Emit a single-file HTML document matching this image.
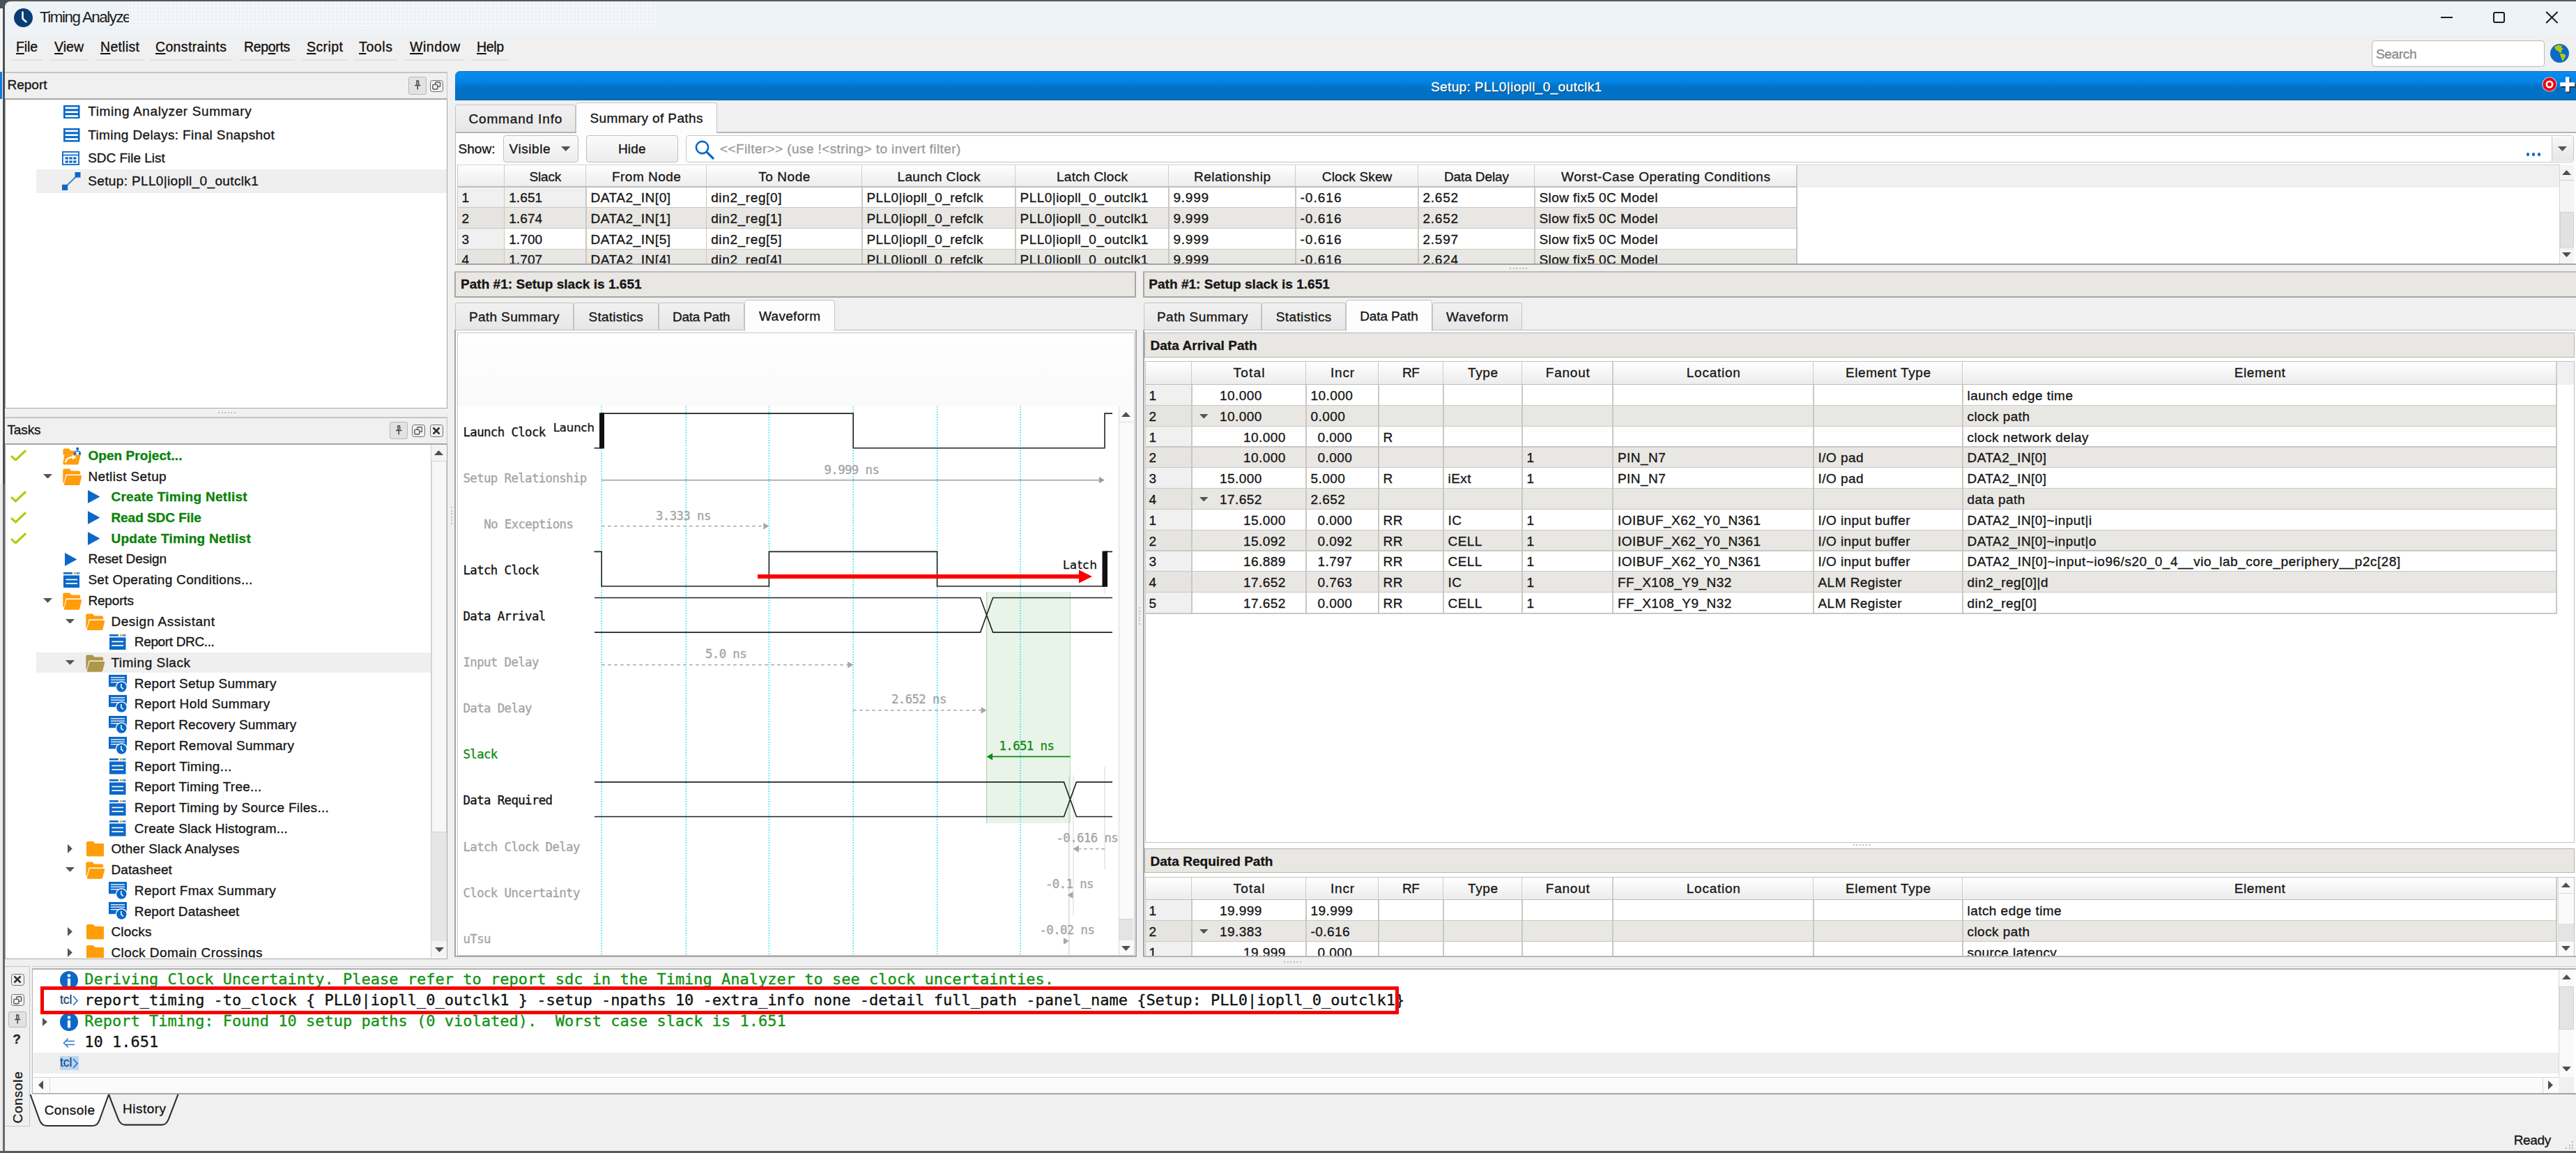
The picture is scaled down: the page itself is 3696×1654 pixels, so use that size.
<!DOCTYPE html>
<html lang="en"><head><meta charset="utf-8"><title>Timing Analyzer</title><style>
html,body{margin:0;padding:0;}
body{width:3696px;height:1654px;overflow:hidden;background:#f0f0f0;position:relative;
font-family:"Liberation Sans",sans-serif;color:#111;}
div,span,svg{position:absolute;box-sizing:border-box;}
.t{white-space:pre;line-height:1;color:#151515;-webkit-text-stroke:0.32px currentColor;}
.m{font-family:"Liberation Mono",monospace;}
.dm{font-family:"DejaVu Sans Mono","Liberation Mono",monospace;}
.ds{font-family:"DejaVu Sans","Liberation Sans",sans-serif;}
u{text-decoration:underline;text-underline-offset:2px;text-decoration-thickness:1.5px;}
.clip{overflow:hidden;}
</style></head>
<body>
<div style="left:0.0px;top:0.0px;width:3696.0px;height:51.0px;background:#eef3f8;"></div>
<div style="left:0.0px;top:51.0px;width:3696.0px;height:52.0px;background:#f0f0f0;"></div>
<div style="left:0.0px;top:0.0px;width:3696.0px;height:2.0px;background:#5a5a5a;"></div>
<div style="left:0.0px;top:0.0px;width:3.9px;height:1654.0px;background:#f5f5f5;"></div>
<div style="left:0.0px;top:103.0px;width:3.3px;height:38.5px;background:#0a7ae0;"></div>
<div style="left:3.8px;top:0.0px;width:2.9px;height:694.0px;background:#4a5157;"></div>
<div style="left:0.0px;top:694.0px;width:4.5px;height:960.0px;background:#ececec;"></div>
<div style="left:4.3px;top:694.0px;width:2.3px;height:960.0px;background:#686868;"></div>
<div style="left:0.0px;top:1651.0px;width:3696.0px;height:3.0px;background:#5a5a5a;"></div>
<div style="left:0.0px;top:0.0px;width:16.0px;height:12.0px;background:#4a5157;"></div>
<div style="left:6.7px;top:2.0px;width:14.0px;height:14.0px;background:#eef3f8;border-top-left-radius:8px;"></div>
<div style="left:184.0px;top:3.0px;width:758.0px;height:39.0px;background:#f3f6fa;background-image:radial-gradient(#e3e8ee 0.9px,transparent 1.1px);background-size:5.6px 5.6px;"></div>
<svg style="left:18.5px;top:10.5px;" width="29" height="29" viewBox="0 0 29 29"><circle cx="14.5" cy="14.5" r="13.5" fill="#0a3d73"/><path d="M13.5 6.4 V15.8 L18.4 20.2" stroke="#fff" stroke-width="2.5" fill="none" stroke-linecap="round" stroke-linejoin="round"/></svg>
<div class="clip" style="left:50.0px;top:4.0px;width:134.5px;height:44.0px;"><div style="left:-50.0px;top:-4.0px;width:3696px;height:1654px;">
<span class="t" style="left:57.0px;top:14.2px;font-size:22.3px;letter-spacing:-1.45px;color:#1c1c1c;-webkit-text-stroke:0;">Timing Analyzer</span>
</div></div>
<div style="left:3502.0px;top:24.4px;width:17.0px;height:2.0px;background:#1d1d1d;"></div>
<div style="left:3577.0px;top:16.6px;width:16.5px;height:16.3px;border:2px solid #1d1d1d;border-radius:3px;"></div>
<svg style="left:3650.0px;top:14.0px;" width="22" height="22" viewBox="0 0 22 22"><path d="M3.2 3L19.6 19M19.6 3L3.2 19" stroke="#1d1d1d" stroke-width="2" fill="none"/></svg>
<span class="t" style="left:23.0px;top:58.2px;font-size:19.5px;letter-spacing:-0.14px;color:#111;"><u>F</u>ile</span>
<div style="left:16.0px;top:85.0px;width:45.0px;height:1.5px;background:#e2e2e2;"></div>
<span class="t" style="left:78.0px;top:58.2px;font-size:19.5px;letter-spacing:0.03px;color:#111;"><u>V</u>iew</span>
<div style="left:71.0px;top:85.0px;width:56.0px;height:1.5px;background:#e2e2e2;"></div>
<span class="t" style="left:144.0px;top:58.2px;font-size:19.5px;letter-spacing:0.30px;color:#111;"><u>N</u>etlist</span>
<div style="left:137.0px;top:85.0px;width:70.0px;height:1.5px;background:#e2e2e2;"></div>
<span class="t" style="left:223.0px;top:58.2px;font-size:19.5px;letter-spacing:0.34px;color:#111;"><u>C</u>onstraints</span>
<div style="left:216.0px;top:85.0px;width:116.0px;height:1.5px;background:#e2e2e2;"></div>
<span class="t" style="left:350.0px;top:58.2px;font-size:19.5px;letter-spacing:-0.35px;color:#111;">Rep<u>o</u>rts</span>
<div style="left:343.0px;top:85.0px;width:80.0px;height:1.5px;background:#e2e2e2;"></div>
<span class="t" style="left:440.0px;top:58.2px;font-size:19.5px;letter-spacing:0.43px;color:#111;"><u>S</u>cript</span>
<div style="left:433.0px;top:85.0px;width:66.0px;height:1.5px;background:#e2e2e2;"></div>
<span class="t" style="left:515.0px;top:58.2px;font-size:19.5px;letter-spacing:0.62px;color:#111;"><u>T</u>ools</span>
<div style="left:508.0px;top:85.0px;width:62.0px;height:1.5px;background:#e2e2e2;"></div>
<span class="t" style="left:588.0px;top:58.2px;font-size:19.5px;letter-spacing:0.53px;color:#111;"><u>W</u>indow</span>
<div style="left:581.0px;top:85.0px;width:86.0px;height:1.5px;background:#e2e2e2;"></div>
<span class="t" style="left:684.0px;top:58.2px;font-size:19.5px;letter-spacing:-0.35px;color:#111;"><u>H</u>elp</span>
<div style="left:677.0px;top:85.0px;width:53.0px;height:1.5px;background:#e2e2e2;"></div>
<div style="left:3403.0px;top:58.0px;width:248.0px;height:37.5px;background:#fff;border:1.6px solid #b9b9b9;border-radius:4.5px;"></div>
<span class="t" style="left:3409.0px;top:67.7px;font-size:19px;letter-spacing:-0.35px;color:#8a8a8a;">Search</span>
<svg style="left:3657.5px;top:61.5px;" width="29" height="29" viewBox="0 0 29 29"><circle cx="14.5" cy="14.5" r="13.5" fill="#0b69c7"/><polygon points="7.0 5.0 12.5 2.5 18.0 3.5 17.0 6.5 20.0 8.0 17.0 10.5 17.5 13.0 14.5 14.0 13.0 11.5 9.5 10.0 8.0 7.5" fill="#b4c90a"/><polygon points="16.0 14.5 20.0 15.0 23.5 17.5 22.0 21.0 20.0 24.0 18.5 26.0 17.5 22.5 16.0 19.0 15.0 16.5" fill="#b4c90a"/></svg>
<div style="left:7.0px;top:103.0px;width:635.0px;height:1.5px;background:#c4c4c4;"></div>
<div style="left:7.0px;top:140.5px;width:635.0px;height:2.0px;background:#a6a6a6;"></div>
<div style="left:641.0px;top:103.0px;width:1.2px;height:39.0px;background:#c4c4c4;"></div>
<span class="t" style="left:10.5px;top:112.4px;font-size:19px;">Report</span>
<div style="left:586.0px;top:110.0px;width:26.0px;height:25.5px;background:#e2e2e2;border:1.5px solid #b8b8b8;border-radius:3px;"></div>
<svg style="left:592.8px;top:115.2px;" width="12.5" height="15" viewBox="0 0 12.5 15"><path d="M4 1 h4 M5 1 v6 M7.6 1 v6 M2 7.4 h8.4 M6.2 7.4 v6" stroke="#444" stroke-width="1.5" fill="none"/></svg>
<div style="left:617.0px;top:114.5px;width:18.5px;height:17.0px;border:1.5px solid #707070;border-radius:3.5px;"></div>
<svg style="left:620.0px;top:117.1px;" width="12.5" height="12" viewBox="0 0 12.5 12"><rect x="4.6" y="0.8" width="7" height="6.6" rx="1.5" fill="none" stroke="#555" stroke-width="1.4"/><rect x="0.8" y="4.4" width="7" height="6.6" rx="1.5" fill="#f0f0f0" stroke="#555" stroke-width="1.4"/></svg>
<div style="left:7.0px;top:142.5px;width:635.0px;height:443.5px;background:#fff;border:1.5px solid #a6a6a6;border-top:none;"></div>
<div style="left:52.0px;top:243.0px;width:588.5px;height:33.5px;background:#efefef;"></div>
<svg style="left:91.0px;top:150.8px;" width="23.5" height="19.5" viewBox="0 0 23.5 19.5"><rect x="0" y="0" width="23.5" height="19.5" fill="#0b68c8"/><rect x="2.6" y="2.5" width="18.3" height="2.7" fill="#fff"/><rect x="2.6" y="8.4" width="18.3" height="2.7" fill="#fff"/><rect x="2.6" y="14.2" width="18.3" height="2.7" fill="#fff"/></svg>
<span class="t" style="left:126.2px;top:150.2px;font-size:19px;letter-spacing:0.61px;">Timing Analyzer Summary</span>
<svg style="left:91.0px;top:184.1px;" width="23.5" height="19.5" viewBox="0 0 23.5 19.5"><rect x="0" y="0" width="23.5" height="19.5" fill="#0b68c8"/><rect x="2.6" y="2.5" width="18.3" height="2.7" fill="#fff"/><rect x="2.6" y="8.4" width="18.3" height="2.7" fill="#fff"/><rect x="2.6" y="14.2" width="18.3" height="2.7" fill="#fff"/></svg>
<span class="t" style="left:126.2px;top:183.5px;font-size:19px;letter-spacing:0.38px;">Timing Delays: Final Snapshot</span>
<svg style="left:89.0px;top:216.7px;" width="25" height="20" viewBox="0 0 25 20"><rect x="0.9" y="0.9" width="23.2" height="18.2" fill="#fff" stroke="#0b68c8" stroke-width="1.8"/><rect x="0.9" y="4.6" width="23.2" height="1.7" fill="#0b68c8"/><rect x="4.5" y="8.4" width="4.4" height="3.2" fill="#0b68c8"/><rect x="10.3" y="8.4" width="4.4" height="3.2" fill="#0b68c8"/><rect x="16.1" y="8.4" width="4.4" height="3.2" fill="#0b68c8"/><rect x="4.5" y="13.4" width="4.4" height="3.2" fill="#0b68c8"/><rect x="10.3" y="13.4" width="4.4" height="3.2" fill="#0b68c8"/><rect x="16.1" y="13.4" width="4.4" height="3.2" fill="#0b68c8"/></svg>
<span class="t" style="left:126.2px;top:216.7px;font-size:19px;letter-spacing:-0.03px;">SDC File List</span>
<svg style="left:89.4px;top:247.0px;" width="26.5" height="26" viewBox="0 0 26.5 26"><path d="M4 22 L22.5 4" stroke="#3d86d6" stroke-width="2" fill="none"/><rect x="0" y="17.8" width="8.2" height="8.2" fill="#0b68c8"/><rect x="18.5" y="0" width="8" height="7.6" fill="#0b68c8"/></svg>
<span class="t" style="left:126.2px;top:250.2px;font-size:19px;letter-spacing:0.36px;">Setup: PLL0|iopll_0_outclk1</span>
<div style="left:313.0px;top:590.5px;width:2.0px;height:2.0px;background:#bdbdbd;"></div>
<div style="left:317.6px;top:590.5px;width:2.0px;height:2.0px;background:#bdbdbd;"></div>
<div style="left:322.2px;top:590.5px;width:2.0px;height:2.0px;background:#bdbdbd;"></div>
<div style="left:326.8px;top:590.5px;width:2.0px;height:2.0px;background:#bdbdbd;"></div>
<div style="left:331.4px;top:590.5px;width:2.0px;height:2.0px;background:#bdbdbd;"></div>
<div style="left:336.0px;top:590.5px;width:2.0px;height:2.0px;background:#bdbdbd;"></div>
<div style="left:7.0px;top:598.0px;width:635.0px;height:1.5px;background:#c4c4c4;"></div>
<div style="left:7.0px;top:635.5px;width:635.0px;height:2.0px;background:#a6a6a6;"></div>
<div style="left:641.0px;top:598.0px;width:1.2px;height:39.0px;background:#c4c4c4;"></div>
<span class="t" style="left:10.5px;top:607.2px;font-size:19px;letter-spacing:-0.14px;">Tasks</span>
<div style="left:559.0px;top:604.5px;width:26.0px;height:25.0px;background:#e2e2e2;border:1.5px solid #b8b8b8;border-radius:3px;"></div>
<svg style="left:565.8px;top:609.5px;" width="12.5" height="15" viewBox="0 0 12.5 15"><path d="M4 1 h4 M5 1 v6 M7.6 1 v6 M2 7.4 h8.4 M6.2 7.4 v6" stroke="#444" stroke-width="1.5" fill="none"/></svg>
<div style="left:590.5px;top:608.5px;width:19.0px;height:18.5px;border:1.5px solid #707070;border-radius:3.5px;"></div>
<svg style="left:593.8px;top:611.9px;" width="12.5" height="12" viewBox="0 0 12.5 12"><rect x="4.6" y="0.8" width="7" height="6.6" rx="1.5" fill="none" stroke="#555" stroke-width="1.4"/><rect x="0.8" y="4.4" width="7" height="6.6" rx="1.5" fill="#f0f0f0" stroke="#555" stroke-width="1.4"/></svg>
<div style="left:616.5px;top:608.5px;width:19.0px;height:18.5px;border:1.5px solid #707070;border-radius:3.5px;"></div>
<svg style="left:620.0px;top:611.8px;" width="12" height="12" viewBox="0 0 12 12"><path d="M1.5 1.5 L10.5 10.5 M10.5 1.5 L1.5 10.5" stroke="#333" stroke-width="2.6" fill="none"/></svg>
<div style="left:7.0px;top:637.5px;width:635.0px;height:738.0px;background:#fff;border:1.5px solid #a6a6a6;border-top:none;"></div>
<div style="left:618.0px;top:637.5px;width:22.5px;height:736.5px;background:#e6e6e6;"></div>
<div style="left:618.0px;top:637.5px;width:1.0px;height:736.5px;background:#d0d0d0;"></div>
<div style="left:619.0px;top:637.5px;width:21.5px;height:23.0px;background:#f4f4f4;"></div>
<div style="left:619.0px;top:1350.0px;width:21.5px;height:24.0px;background:#f4f4f4;"></div>
<div style="left:619.0px;top:660.5px;width:21.5px;height:533.0px;background:#f7f7f7;border:1px solid #d4d4d4;"></div>
<svg style="left:623.0px;top:645.5px;" width="13" height="7" viewBox="0 0 13 7"><path d="M0 7 H13 L6.5 0z" fill="#505050"/></svg>
<svg style="left:623.5px;top:1358.5px;" width="13" height="7" viewBox="0 0 13 7"><path d="M0 0 H13 L6.5 7z" fill="#505050"/></svg>
<div class="clip" style="left:8.5px;top:637.5px;width:609.5px;height:736.5px;"><div style="left:-8.5px;top:-637.5px;width:3696px;height:1654px;">
<div style="left:51.5px;top:936.3px;width:566.5px;height:29.2px;background:#efefef;"></div>
<svg style="left:89.5px;top:641.6px;" width="26.5" height="25" viewBox="0 0 26.5 25"><path d="M0.5 3.5 q0 -2 2 -2 h6.5 l2.4 3 h5 v6 h-15.9z" fill="#ff9d0a"/><path d="M2.6 10.4 h23 l-3 12.6 q-0.4 1.6 -2 1.6 h-18.6 q-2 0 -1.6 -2z" fill="#ff9d0a"/><path d="M4 21.5 q1.5 -8 10.5 -7.6" stroke="#fff" stroke-width="2.2" fill="none"/><path d="M13.5 10.6 l6.5 3.4 l-6 3.6z" fill="#fff"/><rect x="19.4" y="0" width="3.6" height="3.4" fill="#0b68c8"/><rect x="15.8" y="7" width="3.6" height="3.4" fill="#0b68c8"/><rect x="22.8" y="7" width="3.6" height="3.4" fill="#0b68c8"/><path d="M21.2 3 v2.4 M17.6 7.4 v-2 h7 v2" stroke="#0b68c8" stroke-width="1.2" fill="none"/></svg>
<svg style="left:15.0px;top:644.8px;" width="23" height="16.5" viewBox="0 0 23 16.5"><path d="M1 9.1 L7.4 14.9 L22 1.2" stroke="#b3cb10" stroke-width="3.2" fill="none"/></svg>
<span class="t" style="left:126.4px;top:643.8px;font-size:19px;letter-spacing:0.07px;color:#0a820a;font-weight:bold;">Open Project...</span>
<svg style="left:89.5px;top:671.5px;" width="27.5" height="24.8" viewBox="0 0 27.5 24.8"><path d="M0.3 2.6 q0 -2.2 2.2 -2.2 h7.4 l2.5 3 h10.6 q2.2 0 2.2 2.2 v3 h-20.6 l-3 12.5 q-1.3 -0.4 -1.3 -2z" fill="#ff9d0a"/><path d="M5.6 10 h21.2 q0.8 0 0.6 0.9 l-3.1 12 q-0.5 1.8 -2.3 1.8 h-18.6 q-2 0 -1.5 -1.9z" fill="#ff9d0a"/></svg>
<svg style="left:61.5px;top:679.5px;" width="13" height="6.8" viewBox="0 0 13 6.8"><path d="M0 0 H13 L6.5 6.8z" fill="#555"/></svg>
<span class="t" style="left:126.4px;top:673.5px;font-size:19px;letter-spacing:0.38px;">Netlist Setup</span>
<svg style="left:125.5px;top:703.4px;" width="17.5" height="19" viewBox="0 0 17.5 19"><path d="M0 0 L17.5 9.5 L0 19z" fill="#0b68c8"/></svg>
<svg style="left:15.0px;top:704.2px;" width="23" height="16.5" viewBox="0 0 23 16.5"><path d="M1 9.1 L7.4 14.9 L22 1.2" stroke="#b3cb10" stroke-width="3.2" fill="none"/></svg>
<span class="t" style="left:159.4px;top:703.2px;font-size:19px;letter-spacing:0.28px;color:#0a820a;font-weight:bold;">Create Timing Netlist</span>
<svg style="left:125.5px;top:733.2px;" width="17.5" height="19" viewBox="0 0 17.5 19"><path d="M0 0 L17.5 9.5 L0 19z" fill="#0b68c8"/></svg>
<svg style="left:15.0px;top:734.0px;" width="23" height="16.5" viewBox="0 0 23 16.5"><path d="M1 9.1 L7.4 14.9 L22 1.2" stroke="#b3cb10" stroke-width="3.2" fill="none"/></svg>
<span class="t" style="left:159.4px;top:732.9px;font-size:19px;letter-spacing:-0.04px;color:#0a820a;font-weight:bold;">Read SDC File</span>
<svg style="left:125.5px;top:762.9px;" width="17.5" height="19" viewBox="0 0 17.5 19"><path d="M0 0 L17.5 9.5 L0 19z" fill="#0b68c8"/></svg>
<svg style="left:15.0px;top:763.7px;" width="23" height="16.5" viewBox="0 0 23 16.5"><path d="M1 9.1 L7.4 14.9 L22 1.2" stroke="#b3cb10" stroke-width="3.2" fill="none"/></svg>
<span class="t" style="left:159.4px;top:762.6px;font-size:19px;letter-spacing:0.27px;color:#0a820a;font-weight:bold;">Update Timing Netlist</span>
<svg style="left:92.5px;top:792.6px;" width="17.5" height="19" viewBox="0 0 17.5 19"><path d="M0 0 L17.5 9.5 L0 19z" fill="#0b68c8"/></svg>
<span class="t" style="left:126.4px;top:792.4px;font-size:19px;letter-spacing:-0.12px;">Reset Design</span>
<svg style="left:90.5px;top:820.7px;" width="23.5" height="22.5" viewBox="0 0 23.5 22.5"><rect x="0" y="0" width="12.9" height="2.6" fill="#0b68c8"/><rect x="15.0" y="0" width="2.8" height="2.6" fill="#ff9d0a"/><rect x="18.8" y="0" width="1.8" height="2.6" fill="#0b68c8"/><rect x="21.4" y="0" width="1.8" height="2.6" fill="#0b68c8"/><rect x="0" y="4.4" width="23.5" height="18.1" fill="#0b68c8"/><rect x="3.4" y="9.6" width="16.7" height="1.7" fill="#fff"/><rect x="3.4" y="15.2" width="16.7" height="1.7" fill="#fff"/></svg>
<span class="t" style="left:126.4px;top:822.1px;font-size:19px;letter-spacing:0.30px;">Set Operating Conditions...</span>
<svg style="left:89.5px;top:849.8px;" width="27.5" height="24.8" viewBox="0 0 27.5 24.8"><path d="M0.3 2.6 q0 -2.2 2.2 -2.2 h7.4 l2.5 3 h10.6 q2.2 0 2.2 2.2 v3 h-20.6 l-3 12.5 q-1.3 -0.4 -1.3 -2z" fill="#ff9d0a"/><path d="M5.6 10 h21.2 q0.8 0 0.6 0.9 l-3.1 12 q-0.5 1.8 -2.3 1.8 h-18.6 q-2 0 -1.5 -1.9z" fill="#ff9d0a"/></svg>
<svg style="left:61.5px;top:857.8px;" width="13" height="6.8" viewBox="0 0 13 6.8"><path d="M0 0 H13 L6.5 6.8z" fill="#555"/></svg>
<span class="t" style="left:126.4px;top:851.8px;font-size:19px;letter-spacing:-0.17px;">Reports</span>
<svg style="left:122.5px;top:879.6px;" width="27.5" height="24.8" viewBox="0 0 27.5 24.8"><path d="M0.3 2.6 q0 -2.2 2.2 -2.2 h7.4 l2.5 3 h10.6 q2.2 0 2.2 2.2 v3 h-20.6 l-3 12.5 q-1.3 -0.4 -1.3 -2z" fill="#ff9d0a"/><path d="M5.6 10 h21.2 q0.8 0 0.6 0.9 l-3.1 12 q-0.5 1.8 -2.3 1.8 h-18.6 q-2 0 -1.5 -1.9z" fill="#ff9d0a"/></svg>
<svg style="left:94.3px;top:887.6px;" width="13" height="6.8" viewBox="0 0 13 6.8"><path d="M0 0 H13 L6.5 6.8z" fill="#555"/></svg>
<span class="t" style="left:159.4px;top:881.5px;font-size:19px;letter-spacing:0.54px;">Design Assistant</span>
<svg style="left:157.0px;top:909.9px;" width="23.5" height="22.5" viewBox="0 0 23.5 22.5"><rect x="0" y="0" width="12.9" height="2.6" fill="#0b68c8"/><rect x="15.0" y="0" width="2.8" height="2.6" fill="#ff9d0a"/><rect x="18.8" y="0" width="1.8" height="2.6" fill="#0b68c8"/><rect x="21.4" y="0" width="1.8" height="2.6" fill="#0b68c8"/><rect x="0" y="4.4" width="23.5" height="18.1" fill="#0b68c8"/><rect x="3.4" y="9.6" width="16.7" height="1.7" fill="#fff"/><rect x="3.4" y="15.2" width="16.7" height="1.7" fill="#fff"/></svg>
<span class="t" style="left:192.8px;top:911.2px;font-size:19px;letter-spacing:-0.35px;">Report DRC...</span>
<svg style="left:122.5px;top:939.0px;" width="27.5" height="24.8" viewBox="0 0 27.5 24.8"><path d="M0.3 2.6 q0 -2.2 2.2 -2.2 h7.4 l2.5 3 h10.6 q2.2 0 2.2 2.2 v3 h-20.6 l-3 12.5 q-1.3 -0.4 -1.3 -2z" fill="#b0964a"/><path d="M5.6 10 h21.2 q0.8 0 0.6 0.9 l-3.1 12 q-0.5 1.8 -2.3 1.8 h-18.6 q-2 0 -1.5 -1.9z" fill="#b0964a"/></svg>
<svg style="left:94.3px;top:947.0px;" width="13" height="6.8" viewBox="0 0 13 6.8"><path d="M0 0 H13 L6.5 6.8z" fill="#555"/></svg>
<span class="t" style="left:159.4px;top:941.0px;font-size:19px;letter-spacing:0.50px;">Timing Slack</span>
<svg style="left:155.7px;top:967.5px;" width="26.5" height="26" viewBox="0 0 26.5 26"><rect x="0" y="0" width="26.0" height="17.2" fill="#0b68c8"/><rect x="3" y="3.2" width="20.0" height="1.3" fill="#fff"/><rect x="3" y="6.6" width="20.0" height="1.3" fill="#fff"/><rect x="3" y="10" width="20.0" height="1.3" fill="#fff"/><circle cx="18.3" cy="17.6" r="8.6" fill="#fff"/><circle cx="18.3" cy="17.6" r="7.2" fill="#0b68c8"/><path d="M17.9 13 V17.8 L20.9 20.6" stroke="#fff" stroke-width="1.5" fill="none"/></svg>
<span class="t" style="left:192.8px;top:970.7px;font-size:19px;letter-spacing:0.27px;">Report Setup Summary</span>
<svg style="left:155.7px;top:997.2px;" width="26.5" height="26" viewBox="0 0 26.5 26"><rect x="0" y="0" width="26.0" height="17.2" fill="#0b68c8"/><rect x="3" y="3.2" width="20.0" height="1.3" fill="#fff"/><rect x="3" y="6.6" width="20.0" height="1.3" fill="#fff"/><rect x="3" y="10" width="20.0" height="1.3" fill="#fff"/><circle cx="18.3" cy="17.6" r="8.6" fill="#fff"/><circle cx="18.3" cy="17.6" r="7.2" fill="#0b68c8"/><path d="M17.9 13 V17.8 L20.9 20.6" stroke="#fff" stroke-width="1.5" fill="none"/></svg>
<span class="t" style="left:192.8px;top:1000.4px;font-size:19px;letter-spacing:0.36px;">Report Hold Summary</span>
<svg style="left:155.7px;top:1027.0px;" width="26.5" height="26" viewBox="0 0 26.5 26"><rect x="0" y="0" width="26.0" height="17.2" fill="#0b68c8"/><rect x="3" y="3.2" width="20.0" height="1.3" fill="#fff"/><rect x="3" y="6.6" width="20.0" height="1.3" fill="#fff"/><rect x="3" y="10" width="20.0" height="1.3" fill="#fff"/><circle cx="18.3" cy="17.6" r="8.6" fill="#fff"/><circle cx="18.3" cy="17.6" r="7.2" fill="#0b68c8"/><path d="M17.9 13 V17.8 L20.9 20.6" stroke="#fff" stroke-width="1.5" fill="none"/></svg>
<span class="t" style="left:192.8px;top:1030.1px;font-size:19px;letter-spacing:0.15px;">Report Recovery Summary</span>
<svg style="left:155.7px;top:1056.7px;" width="26.5" height="26" viewBox="0 0 26.5 26"><rect x="0" y="0" width="26.0" height="17.2" fill="#0b68c8"/><rect x="3" y="3.2" width="20.0" height="1.3" fill="#fff"/><rect x="3" y="6.6" width="20.0" height="1.3" fill="#fff"/><rect x="3" y="10" width="20.0" height="1.3" fill="#fff"/><circle cx="18.3" cy="17.6" r="8.6" fill="#fff"/><circle cx="18.3" cy="17.6" r="7.2" fill="#0b68c8"/><path d="M17.9 13 V17.8 L20.9 20.6" stroke="#fff" stroke-width="1.5" fill="none"/></svg>
<span class="t" style="left:192.8px;top:1059.8px;font-size:19px;letter-spacing:0.25px;">Report Removal Summary</span>
<svg style="left:157.0px;top:1088.2px;" width="23.5" height="22.5" viewBox="0 0 23.5 22.5"><rect x="0" y="0" width="12.9" height="2.6" fill="#0b68c8"/><rect x="15.0" y="0" width="2.8" height="2.6" fill="#ff9d0a"/><rect x="18.8" y="0" width="1.8" height="2.6" fill="#0b68c8"/><rect x="21.4" y="0" width="1.8" height="2.6" fill="#0b68c8"/><rect x="0" y="4.4" width="23.5" height="18.1" fill="#0b68c8"/><rect x="3.4" y="9.6" width="16.7" height="1.7" fill="#fff"/><rect x="3.4" y="15.2" width="16.7" height="1.7" fill="#fff"/></svg>
<span class="t" style="left:192.8px;top:1089.6px;font-size:19px;letter-spacing:0.36px;">Report Timing...</span>
<svg style="left:157.0px;top:1117.9px;" width="23.5" height="22.5" viewBox="0 0 23.5 22.5"><rect x="0" y="0" width="12.9" height="2.6" fill="#0b68c8"/><rect x="15.0" y="0" width="2.8" height="2.6" fill="#ff9d0a"/><rect x="18.8" y="0" width="1.8" height="2.6" fill="#0b68c8"/><rect x="21.4" y="0" width="1.8" height="2.6" fill="#0b68c8"/><rect x="0" y="4.4" width="23.5" height="18.1" fill="#0b68c8"/><rect x="3.4" y="9.6" width="16.7" height="1.7" fill="#fff"/><rect x="3.4" y="15.2" width="16.7" height="1.7" fill="#fff"/></svg>
<span class="t" style="left:192.8px;top:1119.3px;font-size:19px;letter-spacing:0.26px;">Report Timing Tree...</span>
<svg style="left:157.0px;top:1147.6px;" width="23.5" height="22.5" viewBox="0 0 23.5 22.5"><rect x="0" y="0" width="12.9" height="2.6" fill="#0b68c8"/><rect x="15.0" y="0" width="2.8" height="2.6" fill="#ff9d0a"/><rect x="18.8" y="0" width="1.8" height="2.6" fill="#0b68c8"/><rect x="21.4" y="0" width="1.8" height="2.6" fill="#0b68c8"/><rect x="0" y="4.4" width="23.5" height="18.1" fill="#0b68c8"/><rect x="3.4" y="9.6" width="16.7" height="1.7" fill="#fff"/><rect x="3.4" y="15.2" width="16.7" height="1.7" fill="#fff"/></svg>
<span class="t" style="left:192.8px;top:1149.0px;font-size:19px;letter-spacing:0.28px;">Report Timing by Source Files...</span>
<svg style="left:157.0px;top:1177.4px;" width="23.5" height="22.5" viewBox="0 0 23.5 22.5"><rect x="0" y="0" width="12.9" height="2.6" fill="#0b68c8"/><rect x="15.0" y="0" width="2.8" height="2.6" fill="#ff9d0a"/><rect x="18.8" y="0" width="1.8" height="2.6" fill="#0b68c8"/><rect x="21.4" y="0" width="1.8" height="2.6" fill="#0b68c8"/><rect x="0" y="4.4" width="23.5" height="18.1" fill="#0b68c8"/><rect x="3.4" y="9.6" width="16.7" height="1.7" fill="#fff"/><rect x="3.4" y="15.2" width="16.7" height="1.7" fill="#fff"/></svg>
<span class="t" style="left:192.8px;top:1178.7px;font-size:19px;letter-spacing:0.15px;">Create Slack Histogram...</span>
<svg style="left:123.5px;top:1207.3px;" width="25.5" height="21.5" viewBox="0 0 25.5 21.5"><path d="M0 2.2 q0 -2.2 2.2 -2.2 h7.6 l2.6 3 h11 q2.1 0 2.1 2.2 v14 q0 2.2 -2.1 2.2 h-21.2 q-2.2 0 -2.2 -2.2z" fill="#ff9d0a"/></svg>
<svg style="left:97.4px;top:1211.4px;" width="6.8" height="13" viewBox="0 0 6.8 13"><path d="M0 0 V13 L6.8 6.5z" fill="#555"/></svg>
<span class="t" style="left:159.4px;top:1208.4px;font-size:19px;letter-spacing:0.18px;">Other Slack Analyses</span>
<svg style="left:122.5px;top:1236.2px;" width="27.5" height="24.8" viewBox="0 0 27.5 24.8"><path d="M0.3 2.6 q0 -2.2 2.2 -2.2 h7.4 l2.5 3 h10.6 q2.2 0 2.2 2.2 v3 h-20.6 l-3 12.5 q-1.3 -0.4 -1.3 -2z" fill="#ff9d0a"/><path d="M5.6 10 h21.2 q0.8 0 0.6 0.9 l-3.1 12 q-0.5 1.8 -2.3 1.8 h-18.6 q-2 0 -1.5 -1.9z" fill="#ff9d0a"/></svg>
<svg style="left:94.3px;top:1244.2px;" width="13" height="6.8" viewBox="0 0 13 6.8"><path d="M0 0 H13 L6.5 6.8z" fill="#555"/></svg>
<span class="t" style="left:159.4px;top:1238.2px;font-size:19px;letter-spacing:0.11px;">Datasheet</span>
<svg style="left:155.7px;top:1264.7px;" width="26.5" height="26" viewBox="0 0 26.5 26"><rect x="0" y="0" width="26.0" height="17.2" fill="#0b68c8"/><rect x="3" y="3.2" width="20.0" height="1.3" fill="#fff"/><rect x="3" y="6.6" width="20.0" height="1.3" fill="#fff"/><rect x="3" y="10" width="20.0" height="1.3" fill="#fff"/><circle cx="18.3" cy="17.6" r="8.6" fill="#fff"/><circle cx="18.3" cy="17.6" r="7.2" fill="#0b68c8"/><path d="M17.9 13 V17.8 L20.9 20.6" stroke="#fff" stroke-width="1.5" fill="none"/></svg>
<span class="t" style="left:192.8px;top:1267.9px;font-size:19px;letter-spacing:0.37px;">Report Fmax Summary</span>
<svg style="left:155.7px;top:1294.4px;" width="26.5" height="26" viewBox="0 0 26.5 26"><rect x="0" y="0" width="26.0" height="17.2" fill="#0b68c8"/><rect x="3" y="3.2" width="20.0" height="1.3" fill="#fff"/><rect x="3" y="6.6" width="20.0" height="1.3" fill="#fff"/><rect x="3" y="10" width="20.0" height="1.3" fill="#fff"/><circle cx="18.3" cy="17.6" r="8.6" fill="#fff"/><circle cx="18.3" cy="17.6" r="7.2" fill="#0b68c8"/><path d="M17.9 13 V17.8 L20.9 20.6" stroke="#fff" stroke-width="1.5" fill="none"/></svg>
<span class="t" style="left:192.8px;top:1297.6px;font-size:19px;letter-spacing:0.11px;">Report Datasheet</span>
<svg style="left:123.5px;top:1326.2px;" width="25.5" height="21.5" viewBox="0 0 25.5 21.5"><path d="M0 2.2 q0 -2.2 2.2 -2.2 h7.6 l2.6 3 h11 q2.1 0 2.1 2.2 v14 q0 2.2 -2.1 2.2 h-21.2 q-2.2 0 -2.2 -2.2z" fill="#ff9d0a"/></svg>
<svg style="left:97.4px;top:1330.3px;" width="6.8" height="13" viewBox="0 0 6.8 13"><path d="M0 0 V13 L6.8 6.5z" fill="#555"/></svg>
<span class="t" style="left:159.4px;top:1327.3px;font-size:19px;letter-spacing:0.20px;">Clocks</span>
<svg style="left:123.5px;top:1355.9px;" width="25.5" height="21.5" viewBox="0 0 25.5 21.5"><path d="M0 2.2 q0 -2.2 2.2 -2.2 h7.6 l2.6 3 h11 q2.1 0 2.1 2.2 v14 q0 2.2 -2.1 2.2 h-21.2 q-2.2 0 -2.2 -2.2z" fill="#ff9d0a"/></svg>
<svg style="left:97.4px;top:1360.0px;" width="6.8" height="13" viewBox="0 0 6.8 13"><path d="M0 0 V13 L6.8 6.5z" fill="#555"/></svg>
<span class="t" style="left:159.4px;top:1357.0px;font-size:19px;letter-spacing:0.43px;">Clock Domain Crossings</span>
</div></div>
<div style="left:652.5px;top:102.0px;width:3043.5px;height:41.5px;background:linear-gradient(#0a8cf0 0%,#0486e8 30%,#0071c5 58%,#0071c5 100%);border-top-left-radius:7px;border-top:1.3px solid #1a6ab8;border-bottom:1.5px solid #0d5aa6;"></div>
<span class="t" style="left:2053.0px;top:114.8px;font-size:19px;letter-spacing:0.38px;color:#fff;text-shadow:1px 1px 1px rgba(0,0,0,.45);">Setup: PLL0|iopll_0_outclk1</span>
<svg style="left:3646.0px;top:108.5px;" width="24" height="24" viewBox="0 0 24 24"><circle cx="12" cy="12" r="10.6" fill="#fff" opacity=".75"/><circle cx="12" cy="12" r="7.6" fill="#fff" stroke="#f0000c" stroke-width="4.2"/><circle cx="12" cy="12" r="2.9" fill="#f0000c"/></svg>
<svg style="left:3672.0px;top:108.0px;" width="26" height="28" viewBox="0 0 26 28"><path d="M10.5 4.5 h5.4 v7.6 h7.6 v5.4 h-7.6 v7.6 h-5.4 v-7.6 h-7.6 v-5.4 h7.6z" fill="#2a2a2a"/><path d="M9 2.5 h5.4 v7.8 h7.8 v5.4 h-7.8 v7.8 h-5.4 v-7.8 h-7.8 v-5.4 h7.8z" fill="#fff"/></svg>
<div style="left:652.8px;top:188.5px;width:3047.2px;height:191.5px;background:#fdfdfd;border:1.5px solid #b9b9b9;border-top:2px solid #b4b4b4;border-bottom:2.6px solid #a3a3a3;"></div>
<div style="left:652.8px;top:149.8px;width:173.2px;height:39.2px;background:linear-gradient(#f1f1f1,#e7e7e7);border:1.5px solid #c3c3c3;border-bottom:none;border-radius:4px 4px 0 0;"></div>
<span class="t" style="left:672.4px;top:160.9px;font-size:19px;letter-spacing:0.85px;">Command Info</span>
<div style="left:826.0px;top:147.0px;width:203.0px;height:44.0px;background:#fdfdfd;border:1.5px solid #c3c3c3;border-bottom:none;border-radius:5px 5px 0 0;"></div>
<span class="t" style="left:846.5px;top:159.7px;font-size:19px;letter-spacing:0.38px;">Summary of Paths</span>
<span class="t" style="left:657.5px;top:204.2px;font-size:19px;letter-spacing:0.05px;">Show:</span>
<div style="left:721.5px;top:193.5px;width:108.5px;height:39.0px;background:linear-gradient(#fbfbfb,#ececec);border:1.5px solid #c0c0c0;border-radius:4px;"></div>
<span class="t" style="left:730.5px;top:204.2px;font-size:19px;letter-spacing:0.56px;">Visible</span>
<svg style="left:804.8px;top:210.0px;" width="13.5" height="7" viewBox="0 0 13.5 7"><path d="M0 0 H13.5 L6.75 7z" fill="#555"/></svg>
<div style="left:841.0px;top:193.5px;width:131.5px;height:39.0px;background:linear-gradient(#fbfbfb,#ececec);border:1.5px solid #c0c0c0;border-radius:4px;"></div>
<span class="t" style="left:887.0px;top:204.2px;font-size:19px;letter-spacing:0.14px;">Hide</span>
<div style="left:983.5px;top:194.0px;width:2709.5px;height:38.5px;background:#fff;border:1.5px solid #c6c6c6;border-radius:4px;"></div>
<svg style="left:997.0px;top:200.5px;" width="28" height="28" viewBox="0 0 28 28"><circle cx="10.5" cy="10.5" r="8.6" fill="none" stroke="#0b68c8" stroke-width="2.6"/><path d="M16.8 16.8 L26 26" stroke="#0b68c8" stroke-width="3.2" stroke-linecap="round"/></svg>
<span class="t" style="left:1033.0px;top:203.7px;font-size:19px;letter-spacing:0.40px;color:#9a9a9a;">&lt;&lt;Filter&gt;&gt; (use !&lt;string&gt; to invert filter)</span>
<div style="left:3661.0px;top:195.5px;width:30.5px;height:35.5px;background:linear-gradient(#f8f8f8,#e6e6e6);border-left:1.5px solid #c6c6c6;border-radius:0 3px 3px 0;"></div>
<svg style="left:3670.0px;top:210.0px;" width="13" height="7" viewBox="0 0 13 7"><path d="M0 0 H13 L6.5 7z" fill="#555"/></svg>
<div style="left:3624.5px;top:219.0px;width:4.6px;height:4.6px;background:#0b68c8;border-radius:50%;"></div>
<div style="left:3632.7px;top:219.0px;width:4.6px;height:4.6px;background:#0b68c8;border-radius:50%;"></div>
<div style="left:3640.9px;top:219.0px;width:4.6px;height:4.6px;background:#0b68c8;border-radius:50%;"></div>
<div class="clip" style="left:655.5px;top:236.0px;width:3016.0px;height:141.5px;background:#fff;"><div style="left:-655.5px;top:-236.0px;width:3696px;height:1654px;">
<div style="left:2578.0px;top:236.0px;width:1093.5px;height:32.5px;background:#f0f0f0;"></div>
<div style="left:656.0px;top:236.0px;width:67.7px;height:32.5px;background:linear-gradient(#ffffff,#f3f3f3 60%,#ececec);"></div>
<div style="left:722.5px;top:236.0px;width:1.8px;height:32.5px;background:#cdcdcd;"></div>
<div style="left:723.7px;top:236.0px;width:117.3px;height:32.5px;background:linear-gradient(#ffffff,#f3f3f3 60%,#ececec);"></div>
<div style="left:839.8px;top:236.0px;width:1.8px;height:32.5px;background:#cdcdcd;"></div>
<span class="t" style="left:759.4px;top:243.7px;font-size:19px;letter-spacing:-0.12px;">Slack</span>
<div style="left:841.0px;top:236.0px;width:172.7px;height:32.5px;background:linear-gradient(#ffffff,#f3f3f3 60%,#ececec);"></div>
<div style="left:1012.5px;top:236.0px;width:1.8px;height:32.5px;background:#cdcdcd;"></div>
<span class="t" style="left:877.9px;top:243.7px;font-size:19px;letter-spacing:0.50px;">From Node</span>
<div style="left:1013.7px;top:236.0px;width:223.3px;height:32.5px;background:linear-gradient(#ffffff,#f3f3f3 60%,#ececec);"></div>
<div style="left:1235.8px;top:236.0px;width:1.8px;height:32.5px;background:#cdcdcd;"></div>
<span class="t" style="left:1088.3px;top:243.7px;font-size:19px;letter-spacing:0.54px;">To Node</span>
<div style="left:1237.0px;top:236.0px;width:220.0px;height:32.5px;background:linear-gradient(#ffffff,#f3f3f3 60%,#ececec);"></div>
<div style="left:1455.8px;top:236.0px;width:1.8px;height:32.5px;background:#cdcdcd;"></div>
<span class="t" style="left:1287.5px;top:243.7px;font-size:19px;letter-spacing:0.35px;">Launch Clock</span>
<div style="left:1457.0px;top:236.0px;width:220.0px;height:32.5px;background:linear-gradient(#ffffff,#f3f3f3 60%,#ececec);"></div>
<div style="left:1675.8px;top:236.0px;width:1.8px;height:32.5px;background:#cdcdcd;"></div>
<span class="t" style="left:1516.0px;top:243.7px;font-size:19px;letter-spacing:0.27px;">Latch Clock</span>
<div style="left:1677.0px;top:236.0px;width:182.0px;height:32.5px;background:linear-gradient(#ffffff,#f3f3f3 60%,#ececec);"></div>
<div style="left:1857.8px;top:236.0px;width:1.8px;height:32.5px;background:#cdcdcd;"></div>
<span class="t" style="left:1713.0px;top:243.7px;font-size:19px;letter-spacing:0.49px;">Relationship</span>
<div style="left:1859.0px;top:236.0px;width:176.0px;height:32.5px;background:linear-gradient(#ffffff,#f3f3f3 60%,#ececec);"></div>
<div style="left:2033.8px;top:236.0px;width:1.8px;height:32.5px;background:#cdcdcd;"></div>
<span class="t" style="left:1896.8px;top:243.7px;font-size:19px;letter-spacing:0.14px;">Clock Skew</span>
<div style="left:2035.0px;top:236.0px;width:167.0px;height:32.5px;background:linear-gradient(#ffffff,#f3f3f3 60%,#ececec);"></div>
<div style="left:2200.8px;top:236.0px;width:1.8px;height:32.5px;background:#cdcdcd;"></div>
<span class="t" style="left:2072.0px;top:243.7px;font-size:19px;letter-spacing:-0.11px;">Data Delay</span>
<div style="left:2202.0px;top:236.0px;width:376.0px;height:32.5px;background:linear-gradient(#ffffff,#f3f3f3 60%,#ececec);"></div>
<div style="left:2576.8px;top:236.0px;width:1.8px;height:32.5px;background:#cdcdcd;"></div>
<span class="t" style="left:2240.0px;top:243.7px;font-size:19px;letter-spacing:0.54px;">Worst-Case Operating Conditions</span>
<div style="left:656.0px;top:267.3px;width:1922.0px;height:2.0px;background:#bdbdbd;"></div>
<div style="left:656.0px;top:236.0px;width:3015.5px;height:1.3px;background:#d4d4d4;"></div>
<div style="left:656.0px;top:268.6px;width:1922.0px;height:29.8px;background:#fff;"></div>
<div style="left:656.0px;top:268.6px;width:67.7px;height:29.8px;background:#f0f0f0;"></div>
<div style="left:723.7px;top:268.6px;width:117.3px;height:29.8px;background:#f0f0f0;"></div>
<div style="left:656.0px;top:297.2px;width:1922.0px;height:1.8px;background:#c8c8c6;"></div>
<span class="t" style="left:662.5px;top:274.2px;font-size:19px;letter-spacing:0.45px;">1</span>
<span class="t" style="left:730.2px;top:274.2px;font-size:19px;letter-spacing:0.11px;">1.651</span>
<span class="t" style="left:847.5px;top:274.2px;font-size:19px;letter-spacing:0.54px;">DATA2_IN[0]</span>
<span class="t" style="left:1020.2px;top:274.2px;font-size:19px;letter-spacing:0.62px;">din2_reg[0]</span>
<span class="t" style="left:1243.5px;top:274.2px;font-size:19px;letter-spacing:0.38px;">PLL0|iopll_0_refclk</span>
<span class="t" style="left:1463.5px;top:274.2px;font-size:19px;letter-spacing:0.47px;">PLL0|iopll_0_outclk1</span>
<span class="t" style="left:1683.5px;top:274.2px;font-size:19px;letter-spacing:0.74px;">9.999</span>
<span class="t" style="left:1865.5px;top:274.2px;font-size:19px;letter-spacing:1.03px;">-0.616</span>
<span class="t" style="left:2041.5px;top:274.2px;font-size:19px;letter-spacing:0.74px;">2.652</span>
<span class="t" style="left:2208.5px;top:274.2px;font-size:19px;letter-spacing:0.43px;">Slow fix5 0C Model</span>
<div style="left:656.0px;top:298.4px;width:1922.0px;height:29.8px;background:#e9e7e3;"></div>
<div style="left:656.0px;top:298.4px;width:67.7px;height:29.8px;background:#e6e4e0;"></div>
<div style="left:656.0px;top:326.9px;width:1922.0px;height:1.8px;background:#c8c8c6;"></div>
<span class="t" style="left:662.5px;top:303.9px;font-size:19px;letter-spacing:0.45px;">2</span>
<span class="t" style="left:730.2px;top:303.9px;font-size:19px;letter-spacing:0.11px;">1.674</span>
<span class="t" style="left:847.5px;top:303.9px;font-size:19px;letter-spacing:0.54px;">DATA2_IN[1]</span>
<span class="t" style="left:1020.2px;top:303.9px;font-size:19px;letter-spacing:0.62px;">din2_reg[1]</span>
<span class="t" style="left:1243.5px;top:303.9px;font-size:19px;letter-spacing:0.38px;">PLL0|iopll_0_refclk</span>
<span class="t" style="left:1463.5px;top:303.9px;font-size:19px;letter-spacing:0.47px;">PLL0|iopll_0_outclk1</span>
<span class="t" style="left:1683.5px;top:303.9px;font-size:19px;letter-spacing:0.74px;">9.999</span>
<span class="t" style="left:1865.5px;top:303.9px;font-size:19px;letter-spacing:1.03px;">-0.616</span>
<span class="t" style="left:2041.5px;top:303.9px;font-size:19px;letter-spacing:0.74px;">2.652</span>
<span class="t" style="left:2208.5px;top:303.9px;font-size:19px;letter-spacing:0.43px;">Slow fix5 0C Model</span>
<div style="left:656.0px;top:328.1px;width:1922.0px;height:29.8px;background:#fff;"></div>
<div style="left:656.0px;top:328.1px;width:67.7px;height:29.8px;background:#f0f0f0;"></div>
<div style="left:656.0px;top:356.7px;width:1922.0px;height:1.8px;background:#c8c8c6;"></div>
<span class="t" style="left:662.5px;top:333.7px;font-size:19px;letter-spacing:0.45px;">3</span>
<span class="t" style="left:730.2px;top:333.7px;font-size:19px;letter-spacing:0.11px;">1.700</span>
<span class="t" style="left:847.5px;top:333.7px;font-size:19px;letter-spacing:0.54px;">DATA2_IN[5]</span>
<span class="t" style="left:1020.2px;top:333.7px;font-size:19px;letter-spacing:0.62px;">din2_reg[5]</span>
<span class="t" style="left:1243.5px;top:333.7px;font-size:19px;letter-spacing:0.38px;">PLL0|iopll_0_refclk</span>
<span class="t" style="left:1463.5px;top:333.7px;font-size:19px;letter-spacing:0.47px;">PLL0|iopll_0_outclk1</span>
<span class="t" style="left:1683.5px;top:333.7px;font-size:19px;letter-spacing:0.74px;">9.999</span>
<span class="t" style="left:1865.5px;top:333.7px;font-size:19px;letter-spacing:1.03px;">-0.616</span>
<span class="t" style="left:2041.5px;top:333.7px;font-size:19px;letter-spacing:0.74px;">2.597</span>
<span class="t" style="left:2208.5px;top:333.7px;font-size:19px;letter-spacing:0.43px;">Slow fix5 0C Model</span>
<div style="left:656.0px;top:357.9px;width:1922.0px;height:29.8px;background:#e9e7e3;"></div>
<div style="left:656.0px;top:357.9px;width:67.7px;height:29.8px;background:#e6e4e0;"></div>
<div style="left:656.0px;top:386.4px;width:1922.0px;height:1.8px;background:#c8c8c6;"></div>
<span class="t" style="left:662.5px;top:363.4px;font-size:19px;letter-spacing:0.45px;">4</span>
<span class="t" style="left:730.2px;top:363.4px;font-size:19px;letter-spacing:0.11px;">1.707</span>
<span class="t" style="left:847.5px;top:363.4px;font-size:19px;letter-spacing:0.54px;">DATA2_IN[4]</span>
<span class="t" style="left:1020.2px;top:363.4px;font-size:19px;letter-spacing:0.62px;">din2_reg[4]</span>
<span class="t" style="left:1243.5px;top:363.4px;font-size:19px;letter-spacing:0.38px;">PLL0|iopll_0_refclk</span>
<span class="t" style="left:1463.5px;top:363.4px;font-size:19px;letter-spacing:0.47px;">PLL0|iopll_0_outclk1</span>
<span class="t" style="left:1683.5px;top:363.4px;font-size:19px;letter-spacing:0.74px;">9.999</span>
<span class="t" style="left:1865.5px;top:363.4px;font-size:19px;letter-spacing:1.03px;">-0.616</span>
<span class="t" style="left:2041.5px;top:363.4px;font-size:19px;letter-spacing:0.74px;">2.624</span>
<span class="t" style="left:2208.5px;top:363.4px;font-size:19px;letter-spacing:0.43px;">Slow fix5 0C Model</span>
<div style="left:722.5px;top:268.5px;width:1.8px;height:109.0px;background:#c8c8c6;"></div>
<div style="left:839.8px;top:268.5px;width:1.8px;height:109.0px;background:#c8c8c6;"></div>
<div style="left:1012.5px;top:268.5px;width:1.8px;height:109.0px;background:#c8c8c6;"></div>
<div style="left:1235.8px;top:268.5px;width:1.8px;height:109.0px;background:#c8c8c6;"></div>
<div style="left:1455.8px;top:268.5px;width:1.8px;height:109.0px;background:#c8c8c6;"></div>
<div style="left:1675.8px;top:268.5px;width:1.8px;height:109.0px;background:#c8c8c6;"></div>
<div style="left:1857.8px;top:268.5px;width:1.8px;height:109.0px;background:#c8c8c6;"></div>
<div style="left:2033.8px;top:268.5px;width:1.8px;height:109.0px;background:#c8c8c6;"></div>
<div style="left:2200.8px;top:268.5px;width:1.8px;height:109.0px;background:#c8c8c6;"></div>
<div style="left:2576.8px;top:268.5px;width:1.8px;height:109.0px;background:#c8c8c6;"></div>
<div style="left:656.0px;top:236.0px;width:1.0px;height:141.5px;background:#c8c8c6;"></div>
</div></div>
<div style="left:3671.5px;top:236.0px;width:21.0px;height:141.5px;background:#f4f4f4;"></div>
<div style="left:3671.5px;top:236.0px;width:1.0px;height:141.5px;background:#d6d6d6;"></div>
<div style="left:3672.5px;top:303.5px;width:20.0px;height:50.0px;background:#e2e2e2;border:1px solid #d0d0d0;"></div>
<div style="left:3672.5px;top:258.0px;width:20.0px;height:1.0px;background:#d0d0d0;"></div>
<div style="left:3672.5px;top:355.0px;width:20.0px;height:1.0px;background:#d0d0d0;"></div>
<svg style="left:3676.0px;top:243.5px;" width="13" height="7" viewBox="0 0 13 7"><path d="M0 7 H13 L6.5 0z" fill="#505050"/></svg>
<svg style="left:3676.0px;top:361.5px;" width="13" height="7" viewBox="0 0 13 7"><path d="M0 0 H13 L6.5 7z" fill="#505050"/></svg>
<div style="left:2166.0px;top:383.5px;width:2.0px;height:2.0px;background:#bdbdbd;"></div>
<div style="left:2170.6px;top:383.5px;width:2.0px;height:2.0px;background:#bdbdbd;"></div>
<div style="left:2175.2px;top:383.5px;width:2.0px;height:2.0px;background:#bdbdbd;"></div>
<div style="left:2179.8px;top:383.5px;width:2.0px;height:2.0px;background:#bdbdbd;"></div>
<div style="left:2184.4px;top:383.5px;width:2.0px;height:2.0px;background:#bdbdbd;"></div>
<div style="left:2189.0px;top:383.5px;width:2.0px;height:2.0px;background:#bdbdbd;"></div>
<div style="left:652.0px;top:389.0px;width:978.0px;height:37.5px;background:#e9e7e3;border:2px solid #a9a6a1;border-top-color:#bcbab6;"></div>
<span class="t" style="left:661.0px;top:398.4px;font-size:19px;letter-spacing:0.03px;font-weight:bold;">Path #1: Setup slack is 1.651</span>
<div style="left:1639.5px;top:389.0px;width:2060.5px;height:37.5px;background:#e9e7e3;border:2px solid #a9a6a1;border-top-color:#bcbab6;"></div>
<span class="t" style="left:1648.3px;top:398.4px;font-size:19px;letter-spacing:0.03px;font-weight:bold;">Path #1: Setup slack is 1.651</span>
<div style="left:652.0px;top:473.0px;width:979.0px;height:900.0px;background:#fff;border:1.5px solid #bcbcbc;border-left:2px solid #a2a2a2;border-right:2.5px solid #a9a9a9;border-bottom:2.5px solid #a9a9a9;"></div>
<div style="left:652.5px;top:434.0px;width:170.5px;height:39.0px;background:linear-gradient(#f1f1f1,#e7e7e7);border:1.5px solid #c3c3c3;border-bottom:none;border-radius:4px 4px 0 0;"></div>
<span class="t" style="left:672.9px;top:444.8px;font-size:19px;letter-spacing:0.37px;">Path Summary</span>
<div style="left:823.0px;top:434.0px;width:121.5px;height:39.0px;background:linear-gradient(#f1f1f1,#e7e7e7);border:1.5px solid #c3c3c3;border-bottom:none;border-radius:4px 4px 0 0;"></div>
<span class="t" style="left:844.6px;top:444.8px;font-size:19px;letter-spacing:0.24px;">Statistics</span>
<div style="left:944.5px;top:434.0px;width:123.5px;height:39.0px;background:linear-gradient(#f1f1f1,#e7e7e7);border:1.5px solid #c3c3c3;border-bottom:none;border-radius:4px 4px 0 0;"></div>
<span class="t" style="left:965.0px;top:444.8px;font-size:19px;letter-spacing:-0.25px;">Data Path</span>
<div style="left:1068.0px;top:430.0px;width:130.0px;height:45.0px;background:#fdfdfd;border:1.5px solid #c3c3c3;border-bottom:none;border-radius:5px 5px 0 0;"></div>
<span class="t" style="left:1089.0px;top:443.5px;font-size:19px;letter-spacing:0.31px;">Waveform</span>
<div style="left:655.5px;top:477.0px;width:972.0px;height:893.5px;background:#fff;border:1.5px solid #c6c6c6;"></div>
<div style="left:657.0px;top:478.5px;width:969.0px;height:104.5px;background:linear-gradient(#fefefe,#fafafa);"></div>
<div style="left:1604.5px;top:583.0px;width:21.0px;height:787.0px;background:#fafafa;"></div>
<div style="left:1604.5px;top:583.0px;width:1.0px;height:787.0px;background:#d9d9d9;"></div>
<div style="left:1605.5px;top:1318.5px;width:20.0px;height:30.0px;background:#e4e4e4;"></div>
<div style="left:1605.5px;top:1318.0px;width:20.0px;height:1.0px;background:#cfcfcf;"></div>
<div style="left:1605.5px;top:605.0px;width:20.0px;height:1.0px;background:#dcdcdc;"></div>
<svg style="left:1609.0px;top:590.5px;" width="13" height="7" viewBox="0 0 13 7"><path d="M0 7 H13 L6.5 0z" fill="#505050"/></svg>
<svg style="left:1609.0px;top:1356.5px;" width="13" height="7" viewBox="0 0 13 7"><path d="M0 0 H13 L6.5 7z" fill="#505050"/></svg>
<div class="clip" style="left:657.0px;top:583.0px;width:947.5px;height:787.0px;"><div style="left:-657.0px;top:-583.0px;width:3696px;height:1654px;">
<svg style="left:0;top:0;" width="3696" height="1654" viewBox="0 0 3696 1654"><rect x="1415.6" y="849" width="119.90000000000009" height="332" fill="#e9f4e9"/><path d="M1415.6 849 V1181" stroke="#b4d8b4" stroke-width="1.3" fill="none"/><path d="M1535.5 849 V1181" stroke="#c4e0c4" stroke-width="1.2" fill="none"/><path d="M1585 1100 V1247" stroke="#dcdcdc" stroke-width="1.2" fill="none"/><path d="M1585 843 V852" stroke="#e2e2e2" stroke-width="1.2" fill="none"/><path d="M1533.8 1112 V1370" stroke="#cfcfcf" stroke-width="1.2" fill="none"/><path d="M1540.0 1112 V1313" stroke="#dedede" stroke-width="1.2" fill="none"/><path d="M863.2 583 V1370" stroke="#25dfe6" stroke-width="1.5" fill="none" stroke-dasharray="1.6 2.1"/><path d="M984.2 583 V1370" stroke="#25dfe6" stroke-width="1.5" fill="none" stroke-dasharray="1.6 2.1"/><path d="M1103.4 583 V1370" stroke="#25dfe6" stroke-width="1.5" fill="none" stroke-dasharray="1.6 2.1"/><path d="M1224.2 583 V1370" stroke="#25dfe6" stroke-width="1.5" fill="none" stroke-dasharray="1.6 2.1"/><path d="M1344.6 583 V1370" stroke="#25dfe6" stroke-width="1.5" fill="none" stroke-dasharray="1.6 2.1"/><path d="M1464 583 V1370" stroke="#25dfe6" stroke-width="1.5" fill="none" stroke-dasharray="1.6 2.1"/><path d="M852.5 642.7 H863.2 M863.2 593.1 H1224.2 V642.7 H1585 V593.1 H1596" stroke="#222" stroke-width="1.6" fill="none"/><rect x="860" y="592.3000000000001" width="7" height="51.200000000000024" fill="#111"/><path d="M863.2 688.7 H1583" stroke="#9c9c9c" stroke-width="1.5" fill="none"/><path d="M1585 688.7 l-8 -4.6 v9.2z" fill="#9c9c9c"/><path d="M863.2 754.8 H1095.4" stroke="#a6a6a6" stroke-width="1.5" fill="none" stroke-dasharray="4.5 4.5"/><path d="M1103.4 754.8 l-8 -4.8 v9.6z" fill="#a6a6a6"/><path d="M852.5 791.4 H863.2 V841.0 H1103.4 V791.4 H1344.6 V841.0 H1585 M1585 791.4 H1596" stroke="#222" stroke-width="1.6" fill="none"/><rect x="1581.5" y="790.6" width="7.5" height="51.200000000000024" fill="#111"/><path d="M1087 824 H1548 V817.5 L1567 827 L1548 836.5 V830 H1087z" fill="#fb0000"/><path d="M853 857.5 H1406.6 L1424.6 907.1 H1596 M853 907.1 H1406.6 L1424.6 857.5 H1596" stroke="#222" stroke-width="1.6" fill="none"/><path d="M863.2 953.7 H1216.2" stroke="#a6a6a6" stroke-width="1.5" fill="none" stroke-dasharray="4.5 4.5"/><path d="M1224.2 953.7 l-8 -4.8 v9.6z" fill="#a6a6a6"/><path d="M1224.2 1019 H1407.6" stroke="#a6a6a6" stroke-width="1.5" fill="none" stroke-dasharray="4.5 4.5"/><path d="M1415.6 1019 l-8 -4.8 v9.6z" fill="#a6a6a6"/><path d="M1422.6 1085.4 H1535.5" stroke="#108a10" stroke-width="1.8" fill="none"/><path d="M1415.6 1085.4 l8.5 -5 v10z" fill="#108a10"/><path d="M853 1121.8999999999999 H1526.5 L1544.5 1171.5 H1596 M853 1171.5 H1526.5 L1544.5 1121.8999999999999 H1596" stroke="#222" stroke-width="1.6" fill="none"/><path d="M1585 1217.7 H1548.5" stroke="#a6a6a6" stroke-width="1.5" fill="none" stroke-dasharray="4.5 4"/><path d="M1539.5 1217.7 l8.5 -5 v10z" fill="#a6a6a6"/><path d="M1531.5 1284 l8 -5 v10z" fill="#a6a6a6"/><path d="M1533.5 1350 l-7.5 -5 v10z" fill="#a6a6a6"/></svg>
</div></div>
<div class="clip" style="left:657.0px;top:583.0px;width:947.5px;height:787.0px;"><div style="left:-657.0px;top:-583.0px;width:3696px;height:1654px;">
<span class="t dm" style="left:664.5px;top:611.6px;font-size:17.4px;letter-spacing:-0.63px;color:#111;">Launch Clock</span>
<span class="t dm" style="left:664.5px;top:677.7px;font-size:17.4px;letter-spacing:-0.63px;color:#a4a4a4;">Setup Relationship</span>
<span class="t dm" style="left:694.3px;top:743.8px;font-size:17.4px;letter-spacing:-0.63px;color:#a4a4a4;">No Exceptions</span>
<span class="t dm" style="left:664.5px;top:809.9px;font-size:17.4px;letter-spacing:-0.63px;color:#111;">Latch Clock</span>
<span class="t dm" style="left:664.5px;top:876.0px;font-size:17.4px;letter-spacing:-0.63px;color:#111;">Data Arrival</span>
<span class="t dm" style="left:664.5px;top:942.1px;font-size:17.4px;letter-spacing:-0.63px;color:#a4a4a4;">Input Delay</span>
<span class="t dm" style="left:664.5px;top:1008.2px;font-size:17.4px;letter-spacing:-0.63px;color:#a4a4a4;">Data Delay</span>
<span class="t dm" style="left:664.5px;top:1074.3px;font-size:17.4px;letter-spacing:-0.63px;color:#108a10;">Slack</span>
<span class="t dm" style="left:664.5px;top:1140.4px;font-size:17.4px;letter-spacing:-0.63px;color:#111;">Data Required</span>
<span class="t dm" style="left:664.5px;top:1206.5px;font-size:17.4px;letter-spacing:-0.63px;color:#a4a4a4;">Latch Clock Delay</span>
<span class="t dm" style="left:664.5px;top:1272.6px;font-size:17.4px;letter-spacing:-0.63px;color:#a4a4a4;">Clock Uncertainty</span>
<span class="t dm" style="left:664.5px;top:1338.7px;font-size:17.4px;letter-spacing:-0.63px;color:#a4a4a4;">uTsu</span>
<span class="t dm" style="left:1182.5px;top:666.1px;font-size:17.4px;letter-spacing:-0.63px;color:#a4a4a4;">9.999 ns</span>
<span class="t dm" style="left:941.0px;top:732.1px;font-size:17.4px;letter-spacing:-0.63px;color:#a4a4a4;">3.333 ns</span>
<span class="t dm" style="left:1012.0px;top:929.7px;font-size:17.4px;letter-spacing:-0.63px;color:#a4a4a4;">5.0 ns</span>
<span class="t dm" style="left:1279.0px;top:995.1px;font-size:17.4px;letter-spacing:-0.63px;color:#a4a4a4;">2.652 ns</span>
<span class="t dm" style="left:1433.5px;top:1061.8px;font-size:17.4px;letter-spacing:-0.63px;color:#108a10;">1.651 ns</span>
<span class="t dm" style="left:1515.5px;top:1194.1px;font-size:17.4px;letter-spacing:-0.63px;color:#a4a4a4;">-0.616 ns</span>
<span class="t dm" style="left:1500.0px;top:1260.1px;font-size:17.4px;letter-spacing:-0.63px;color:#a4a4a4;">-0.1 ns</span>
<span class="t dm" style="left:1491.5px;top:1326.1px;font-size:17.4px;letter-spacing:-0.63px;color:#a4a4a4;">-0.02 ns</span>
<span class="t ds" style="left:793.7px;top:605.9px;font-size:16.5px;letter-spacing:-0.09px;color:#111;">Launch</span>
<span class="t ds" style="left:1525.0px;top:803.2px;font-size:16.5px;letter-spacing:0.92px;color:#111;">Latch</span>
</div></div>
<div style="left:1639.5px;top:473.0px;width:2060.5px;height:900.0px;background:#fff;border:1.5px solid #bcbcbc;border-left:2px solid #a2a2a2;border-bottom:2.5px solid #a9a9a9;"></div>
<div style="left:1640.5px;top:434.0px;width:169.5px;height:39.0px;background:linear-gradient(#f1f1f1,#e7e7e7);border:1.5px solid #c3c3c3;border-bottom:none;border-radius:4px 4px 0 0;"></div>
<span class="t" style="left:1660.0px;top:444.8px;font-size:19px;letter-spacing:0.45px;">Path Summary</span>
<div style="left:1810.0px;top:434.0px;width:121.0px;height:39.0px;background:linear-gradient(#f1f1f1,#e7e7e7);border:1.5px solid #c3c3c3;border-bottom:none;border-radius:4px 4px 0 0;"></div>
<span class="t" style="left:1830.7px;top:444.8px;font-size:19px;letter-spacing:0.40px;">Statistics</span>
<div style="left:2055.0px;top:434.0px;width:129.0px;height:39.0px;background:linear-gradient(#f1f1f1,#e7e7e7);border:1.5px solid #c3c3c3;border-bottom:none;border-radius:4px 4px 0 0;"></div>
<span class="t" style="left:2075.1px;top:444.8px;font-size:19px;letter-spacing:0.43px;">Waveform</span>
<div style="left:1931.0px;top:430.0px;width:124.0px;height:45.0px;background:#fdfdfd;border:1.5px solid #c3c3c3;border-bottom:none;border-radius:5px 5px 0 0;"></div>
<span class="t" style="left:1951.2px;top:443.5px;font-size:19px;letter-spacing:-0.12px;">Data Path</span>
<div style="left:1642.0px;top:477.3px;width:2051.5px;height:35.5px;background:#e9e7e3;border:1.7px solid #b7b4af;"></div>
<span class="t" style="left:1650.5px;top:486.3px;font-size:19px;letter-spacing:0.04px;font-weight:bold;">Data Arrival Path</span>
<div style="left:1642.5px;top:517.6px;width:2051.0px;height:691.4px;background:#fff;border:1.8px solid #c2c2c2;"></div>
<div class="clip" style="left:1644.0px;top:518.6px;width:2049.0px;height:689.4px;background:#fff;"><div style="left:-1644.0px;top:-518.6px;width:3696px;height:1654px;">
<div style="left:3668.5px;top:518.6px;width:24.5px;height:33.4px;background:#f0f0f0;"></div>
<div style="left:1644.0px;top:518.6px;width:66.0px;height:33.4px;background:linear-gradient(#ffffff,#f3f3f3 60%,#ececec);"></div>
<div style="left:1708.8px;top:518.6px;width:1.8px;height:33.4px;background:#cdcdcd;"></div>
<div style="left:1710.0px;top:518.6px;width:164.0px;height:33.4px;background:linear-gradient(#ffffff,#f3f3f3 60%,#ececec);"></div>
<div style="left:1872.8px;top:518.6px;width:1.8px;height:33.4px;background:#cdcdcd;"></div>
<span class="t" style="left:1769.5px;top:525.3px;font-size:19px;letter-spacing:1.22px;">Total</span>
<div style="left:1874.0px;top:518.6px;width:104.0px;height:33.4px;background:linear-gradient(#ffffff,#f3f3f3 60%,#ececec);"></div>
<div style="left:1976.8px;top:518.6px;width:1.8px;height:33.4px;background:#cdcdcd;"></div>
<span class="t" style="left:1909.0px;top:525.3px;font-size:19px;letter-spacing:0.78px;">Incr</span>
<div style="left:1978.0px;top:518.6px;width:93.0px;height:33.4px;background:linear-gradient(#ffffff,#f3f3f3 60%,#ececec);"></div>
<div style="left:2069.8px;top:518.6px;width:1.8px;height:33.4px;background:#cdcdcd;"></div>
<span class="t" style="left:2012.0px;top:525.3px;font-size:19px;letter-spacing:-0.35px;">RF</span>
<div style="left:2071.0px;top:518.6px;width:113.0px;height:33.4px;background:linear-gradient(#ffffff,#f3f3f3 60%,#ececec);"></div>
<div style="left:2182.8px;top:518.6px;width:1.8px;height:33.4px;background:#cdcdcd;"></div>
<span class="t" style="left:2106.0px;top:525.3px;font-size:19px;letter-spacing:0.60px;">Type</span>
<div style="left:2184.0px;top:518.6px;width:130.5px;height:33.4px;background:linear-gradient(#ffffff,#f3f3f3 60%,#ececec);"></div>
<div style="left:2313.3px;top:518.6px;width:1.8px;height:33.4px;background:#cdcdcd;"></div>
<span class="t" style="left:2217.8px;top:525.3px;font-size:19px;letter-spacing:0.77px;">Fanout</span>
<div style="left:2314.5px;top:518.6px;width:287.5px;height:33.4px;background:linear-gradient(#ffffff,#f3f3f3 60%,#ececec);"></div>
<div style="left:2600.8px;top:518.6px;width:1.8px;height:33.4px;background:#cdcdcd;"></div>
<span class="t" style="left:2419.8px;top:525.3px;font-size:19px;letter-spacing:0.74px;">Location</span>
<div style="left:2602.0px;top:518.6px;width:214.0px;height:33.4px;background:linear-gradient(#ffffff,#f3f3f3 60%,#ececec);"></div>
<div style="left:2814.8px;top:518.6px;width:1.8px;height:33.4px;background:#cdcdcd;"></div>
<span class="t" style="left:2648.0px;top:525.3px;font-size:19px;letter-spacing:0.56px;">Element Type</span>
<div style="left:2816.0px;top:518.6px;width:852.5px;height:33.4px;background:linear-gradient(#ffffff,#f3f3f3 60%,#ececec);"></div>
<div style="left:3667.3px;top:518.6px;width:1.8px;height:33.4px;background:#cdcdcd;"></div>
<span class="t" style="left:3205.8px;top:525.3px;font-size:19px;letter-spacing:0.55px;">Element</span>
<div style="left:1644.0px;top:550.8px;width:2024.5px;height:2.0px;background:#bdbdbd;"></div>
<div style="left:1644.0px;top:552.2px;width:2024.5px;height:29.8px;background:#fff;"></div>
<div style="left:1644.0px;top:552.2px;width:66.0px;height:29.8px;background:#f0f0f0;"></div>
<div style="left:1644.0px;top:580.8px;width:2024.5px;height:1.8px;background:#c8c8c6;"></div>
<span class="t" style="left:1648.5px;top:557.9px;font-size:19px;letter-spacing:0.45px;">1</span>
<span class="t" style="left:1750.0px;top:557.9px;font-size:19px;letter-spacing:0.45px;">10.000</span>
<span class="t" style="left:1880.5px;top:557.9px;font-size:19px;letter-spacing:0.45px;">10.000</span>
<span class="t" style="left:2822.5px;top:557.9px;font-size:19px;letter-spacing:0.45px;">launch edge time</span>
<div style="left:1644.0px;top:582.0px;width:2024.5px;height:29.8px;background:#e9e7e3;"></div>
<div style="left:1644.0px;top:582.0px;width:66.0px;height:29.8px;background:#e6e4e0;"></div>
<div style="left:1644.0px;top:610.6px;width:2024.5px;height:1.8px;background:#c8c8c6;"></div>
<span class="t" style="left:1648.5px;top:587.7px;font-size:19px;letter-spacing:0.45px;">2</span>
<svg style="left:1720.8px;top:593.7px;" width="12.5" height="6.6" viewBox="0 0 12.5 6.6"><path d="M0 0 H12.5 L6.25 6.6z" fill="#555"/></svg>
<span class="t" style="left:1750.0px;top:587.7px;font-size:19px;letter-spacing:0.45px;">10.000</span>
<span class="t" style="left:1880.5px;top:587.7px;font-size:19px;letter-spacing:0.45px;">0.000</span>
<span class="t" style="left:2822.5px;top:587.7px;font-size:19px;letter-spacing:0.45px;">clock path</span>
<div style="left:1644.0px;top:611.8px;width:2024.5px;height:29.8px;background:#fff;"></div>
<div style="left:1644.0px;top:611.8px;width:66.0px;height:29.8px;background:#f0f0f0;"></div>
<div style="left:1644.0px;top:640.4px;width:2024.5px;height:1.8px;background:#c8c8c6;"></div>
<span class="t" style="left:1648.5px;top:617.5px;font-size:19px;letter-spacing:0.45px;">1</span>
<span class="t" style="left:1784.0px;top:617.5px;font-size:19px;letter-spacing:0.45px;">10.000</span>
<span class="t" style="left:1890.5px;top:617.5px;font-size:19px;letter-spacing:0.45px;">0.000</span>
<span class="t" style="left:1984.5px;top:617.5px;font-size:19px;letter-spacing:0.45px;">R</span>
<span class="t" style="left:2822.5px;top:617.5px;font-size:19px;letter-spacing:0.45px;">clock network delay</span>
<div style="left:1644.0px;top:641.6px;width:2024.5px;height:29.8px;background:#e9e7e3;"></div>
<div style="left:1644.0px;top:641.6px;width:66.0px;height:29.8px;background:#e6e4e0;"></div>
<div style="left:1644.0px;top:670.2px;width:2024.5px;height:1.8px;background:#c8c8c6;"></div>
<span class="t" style="left:1648.5px;top:647.3px;font-size:19px;letter-spacing:0.45px;">2</span>
<span class="t" style="left:1784.0px;top:647.3px;font-size:19px;letter-spacing:0.45px;">10.000</span>
<span class="t" style="left:1890.5px;top:647.3px;font-size:19px;letter-spacing:0.45px;">0.000</span>
<span class="t" style="left:2190.5px;top:647.3px;font-size:19px;letter-spacing:0.45px;">1</span>
<span class="t" style="left:2321.0px;top:647.3px;font-size:19px;letter-spacing:0.45px;">PIN_N7</span>
<span class="t" style="left:2608.5px;top:647.3px;font-size:19px;letter-spacing:0.45px;">I/O pad</span>
<span class="t" style="left:2822.5px;top:647.3px;font-size:19px;letter-spacing:0.45px;">DATA2_IN[0]</span>
<div style="left:1644.0px;top:671.4px;width:2024.5px;height:29.8px;background:#fff;"></div>
<div style="left:1644.0px;top:671.4px;width:66.0px;height:29.8px;background:#f0f0f0;"></div>
<div style="left:1644.0px;top:700.0px;width:2024.5px;height:1.8px;background:#c8c8c6;"></div>
<span class="t" style="left:1648.5px;top:677.1px;font-size:19px;letter-spacing:0.45px;">3</span>
<span class="t" style="left:1750.0px;top:677.1px;font-size:19px;letter-spacing:0.45px;">15.000</span>
<span class="t" style="left:1880.5px;top:677.1px;font-size:19px;letter-spacing:0.45px;">5.000</span>
<span class="t" style="left:1984.5px;top:677.1px;font-size:19px;letter-spacing:0.45px;">R</span>
<span class="t" style="left:2077.5px;top:677.1px;font-size:19px;letter-spacing:0.45px;">iExt</span>
<span class="t" style="left:2190.5px;top:677.1px;font-size:19px;letter-spacing:0.45px;">1</span>
<span class="t" style="left:2321.0px;top:677.1px;font-size:19px;letter-spacing:0.45px;">PIN_N7</span>
<span class="t" style="left:2608.5px;top:677.1px;font-size:19px;letter-spacing:0.45px;">I/O pad</span>
<span class="t" style="left:2822.5px;top:677.1px;font-size:19px;letter-spacing:0.45px;">DATA2_IN[0]</span>
<div style="left:1644.0px;top:701.2px;width:2024.5px;height:29.8px;background:#e9e7e3;"></div>
<div style="left:1644.0px;top:701.2px;width:66.0px;height:29.8px;background:#e6e4e0;"></div>
<div style="left:1644.0px;top:729.8px;width:2024.5px;height:1.8px;background:#c8c8c6;"></div>
<span class="t" style="left:1648.5px;top:706.9px;font-size:19px;letter-spacing:0.45px;">4</span>
<svg style="left:1720.8px;top:712.9px;" width="12.5" height="6.6" viewBox="0 0 12.5 6.6"><path d="M0 0 H12.5 L6.25 6.6z" fill="#555"/></svg>
<span class="t" style="left:1750.0px;top:706.9px;font-size:19px;letter-spacing:0.45px;">17.652</span>
<span class="t" style="left:1880.5px;top:706.9px;font-size:19px;letter-spacing:0.45px;">2.652</span>
<span class="t" style="left:2822.5px;top:706.9px;font-size:19px;letter-spacing:0.45px;">data path</span>
<div style="left:1644.0px;top:731.0px;width:2024.5px;height:29.8px;background:#fff;"></div>
<div style="left:1644.0px;top:731.0px;width:66.0px;height:29.8px;background:#f0f0f0;"></div>
<div style="left:1644.0px;top:759.6px;width:2024.5px;height:1.8px;background:#c8c8c6;"></div>
<span class="t" style="left:1648.5px;top:736.7px;font-size:19px;letter-spacing:0.45px;">1</span>
<span class="t" style="left:1784.0px;top:736.7px;font-size:19px;letter-spacing:0.45px;">15.000</span>
<span class="t" style="left:1890.5px;top:736.7px;font-size:19px;letter-spacing:0.45px;">0.000</span>
<span class="t" style="left:1984.5px;top:736.7px;font-size:19px;letter-spacing:0.45px;">RR</span>
<span class="t" style="left:2077.5px;top:736.7px;font-size:19px;letter-spacing:0.45px;">IC</span>
<span class="t" style="left:2190.5px;top:736.7px;font-size:19px;letter-spacing:0.45px;">1</span>
<span class="t" style="left:2321.0px;top:736.7px;font-size:19px;letter-spacing:0.45px;">IOIBUF_X62_Y0_N361</span>
<span class="t" style="left:2608.5px;top:736.7px;font-size:19px;letter-spacing:0.45px;">I/O input buffer</span>
<span class="t" style="left:2822.5px;top:736.7px;font-size:19px;letter-spacing:0.45px;">DATA2_IN[0]~input|i</span>
<div style="left:1644.0px;top:760.8px;width:2024.5px;height:29.8px;background:#e9e7e3;"></div>
<div style="left:1644.0px;top:760.8px;width:66.0px;height:29.8px;background:#e6e4e0;"></div>
<div style="left:1644.0px;top:789.4px;width:2024.5px;height:1.8px;background:#c8c8c6;"></div>
<span class="t" style="left:1648.5px;top:766.5px;font-size:19px;letter-spacing:0.45px;">2</span>
<span class="t" style="left:1784.0px;top:766.5px;font-size:19px;letter-spacing:0.45px;">15.092</span>
<span class="t" style="left:1890.5px;top:766.5px;font-size:19px;letter-spacing:0.45px;">0.092</span>
<span class="t" style="left:1984.5px;top:766.5px;font-size:19px;letter-spacing:0.45px;">RR</span>
<span class="t" style="left:2077.5px;top:766.5px;font-size:19px;letter-spacing:0.45px;">CELL</span>
<span class="t" style="left:2190.5px;top:766.5px;font-size:19px;letter-spacing:0.45px;">1</span>
<span class="t" style="left:2321.0px;top:766.5px;font-size:19px;letter-spacing:0.45px;">IOIBUF_X62_Y0_N361</span>
<span class="t" style="left:2608.5px;top:766.5px;font-size:19px;letter-spacing:0.45px;">I/O input buffer</span>
<span class="t" style="left:2822.5px;top:766.5px;font-size:19px;letter-spacing:0.45px;">DATA2_IN[0]~input|o</span>
<div style="left:1644.0px;top:790.6px;width:2024.5px;height:29.8px;background:#fff;"></div>
<div style="left:1644.0px;top:790.6px;width:66.0px;height:29.8px;background:#f0f0f0;"></div>
<div style="left:1644.0px;top:819.2px;width:2024.5px;height:1.8px;background:#c8c8c6;"></div>
<span class="t" style="left:1648.5px;top:796.3px;font-size:19px;letter-spacing:0.45px;">3</span>
<span class="t" style="left:1784.0px;top:796.3px;font-size:19px;letter-spacing:0.45px;">16.889</span>
<span class="t" style="left:1890.5px;top:796.3px;font-size:19px;letter-spacing:0.45px;">1.797</span>
<span class="t" style="left:1984.5px;top:796.3px;font-size:19px;letter-spacing:0.45px;">RR</span>
<span class="t" style="left:2077.5px;top:796.3px;font-size:19px;letter-spacing:0.45px;">CELL</span>
<span class="t" style="left:2190.5px;top:796.3px;font-size:19px;letter-spacing:0.45px;">1</span>
<span class="t" style="left:2321.0px;top:796.3px;font-size:19px;letter-spacing:0.45px;">IOIBUF_X62_Y0_N361</span>
<span class="t" style="left:2608.5px;top:796.3px;font-size:19px;letter-spacing:0.45px;">I/O input buffer</span>
<span class="t" style="left:2822.5px;top:796.3px;font-size:19px;letter-spacing:0.53px;">DATA2_IN[0]~input~io96/s20_0_4__vio_lab_core_periphery__p2c[28]</span>
<div style="left:1644.0px;top:820.4px;width:2024.5px;height:29.8px;background:#e9e7e3;"></div>
<div style="left:1644.0px;top:820.4px;width:66.0px;height:29.8px;background:#e6e4e0;"></div>
<div style="left:1644.0px;top:849.0px;width:2024.5px;height:1.8px;background:#c8c8c6;"></div>
<span class="t" style="left:1648.5px;top:826.1px;font-size:19px;letter-spacing:0.45px;">4</span>
<span class="t" style="left:1784.0px;top:826.1px;font-size:19px;letter-spacing:0.45px;">17.652</span>
<span class="t" style="left:1890.5px;top:826.1px;font-size:19px;letter-spacing:0.45px;">0.763</span>
<span class="t" style="left:1984.5px;top:826.1px;font-size:19px;letter-spacing:0.45px;">RR</span>
<span class="t" style="left:2077.5px;top:826.1px;font-size:19px;letter-spacing:0.45px;">IC</span>
<span class="t" style="left:2190.5px;top:826.1px;font-size:19px;letter-spacing:0.45px;">1</span>
<span class="t" style="left:2321.0px;top:826.1px;font-size:19px;letter-spacing:0.45px;">FF_X108_Y9_N32</span>
<span class="t" style="left:2608.5px;top:826.1px;font-size:19px;letter-spacing:0.45px;">ALM Register</span>
<span class="t" style="left:2822.5px;top:826.1px;font-size:19px;letter-spacing:0.45px;">din2_reg[0]|d</span>
<div style="left:1644.0px;top:850.2px;width:2024.5px;height:29.8px;background:#fff;"></div>
<div style="left:1644.0px;top:850.2px;width:66.0px;height:29.8px;background:#f0f0f0;"></div>
<div style="left:1644.0px;top:878.8px;width:2024.5px;height:1.8px;background:#c8c8c6;"></div>
<span class="t" style="left:1648.5px;top:855.9px;font-size:19px;letter-spacing:0.45px;">5</span>
<span class="t" style="left:1784.0px;top:855.9px;font-size:19px;letter-spacing:0.45px;">17.652</span>
<span class="t" style="left:1890.5px;top:855.9px;font-size:19px;letter-spacing:0.45px;">0.000</span>
<span class="t" style="left:1984.5px;top:855.9px;font-size:19px;letter-spacing:0.45px;">RR</span>
<span class="t" style="left:2077.5px;top:855.9px;font-size:19px;letter-spacing:0.45px;">CELL</span>
<span class="t" style="left:2190.5px;top:855.9px;font-size:19px;letter-spacing:0.45px;">1</span>
<span class="t" style="left:2321.0px;top:855.9px;font-size:19px;letter-spacing:0.45px;">FF_X108_Y9_N32</span>
<span class="t" style="left:2608.5px;top:855.9px;font-size:19px;letter-spacing:0.45px;">ALM Register</span>
<span class="t" style="left:2822.5px;top:855.9px;font-size:19px;letter-spacing:0.45px;">din2_reg[0]</span>
<div style="left:1708.8px;top:552.0px;width:1.8px;height:327.8px;background:#c8c8c6;"></div>
<div style="left:1872.8px;top:552.0px;width:1.8px;height:327.8px;background:#c8c8c6;"></div>
<div style="left:1976.8px;top:552.0px;width:1.8px;height:327.8px;background:#c8c8c6;"></div>
<div style="left:2069.8px;top:552.0px;width:1.8px;height:327.8px;background:#c8c8c6;"></div>
<div style="left:2182.8px;top:552.0px;width:1.8px;height:327.8px;background:#c8c8c6;"></div>
<div style="left:2313.3px;top:552.0px;width:1.8px;height:327.8px;background:#c8c8c6;"></div>
<div style="left:2600.8px;top:552.0px;width:1.8px;height:327.8px;background:#c8c8c6;"></div>
<div style="left:2814.8px;top:552.0px;width:1.8px;height:327.8px;background:#c8c8c6;"></div>
<div style="left:3667.3px;top:552.0px;width:1.8px;height:327.8px;background:#c8c8c6;"></div>
</div></div>
<div style="left:2658.5px;top:1211.0px;width:2.0px;height:2.0px;background:#bdbdbd;"></div>
<div style="left:2663.1px;top:1211.0px;width:2.0px;height:2.0px;background:#bdbdbd;"></div>
<div style="left:2667.7px;top:1211.0px;width:2.0px;height:2.0px;background:#bdbdbd;"></div>
<div style="left:2672.3px;top:1211.0px;width:2.0px;height:2.0px;background:#bdbdbd;"></div>
<div style="left:2676.9px;top:1211.0px;width:2.0px;height:2.0px;background:#bdbdbd;"></div>
<div style="left:2681.5px;top:1211.0px;width:2.0px;height:2.0px;background:#bdbdbd;"></div>
<div style="left:1642.0px;top:1216.7px;width:2051.5px;height:35.5px;background:#e9e7e3;border:1.7px solid #b7b4af;"></div>
<span class="t" style="left:1650.5px;top:1225.7px;font-size:19px;letter-spacing:0.04px;font-weight:bold;">Data Required Path</span>
<div style="left:1642.5px;top:1257.6px;width:2051.0px;height:114.4px;background:#fff;border:1.8px solid #c2c2c2;"></div>
<div class="clip" style="left:1644.0px;top:1258.6px;width:2025.5px;height:112.4px;background:#fff;"><div style="left:-1644.0px;top:-1258.6px;width:3696px;height:1654px;">
<div style="left:3668.5px;top:1258.6px;width:1.0px;height:32.4px;background:#f0f0f0;"></div>
<div style="left:1644.0px;top:1258.6px;width:66.0px;height:32.4px;background:linear-gradient(#ffffff,#f3f3f3 60%,#ececec);"></div>
<div style="left:1708.8px;top:1258.6px;width:1.8px;height:32.4px;background:#cdcdcd;"></div>
<div style="left:1710.0px;top:1258.6px;width:164.0px;height:32.4px;background:linear-gradient(#ffffff,#f3f3f3 60%,#ececec);"></div>
<div style="left:1872.8px;top:1258.6px;width:1.8px;height:32.4px;background:#cdcdcd;"></div>
<span class="t" style="left:1769.5px;top:1265.3px;font-size:19px;letter-spacing:1.22px;">Total</span>
<div style="left:1874.0px;top:1258.6px;width:104.0px;height:32.4px;background:linear-gradient(#ffffff,#f3f3f3 60%,#ececec);"></div>
<div style="left:1976.8px;top:1258.6px;width:1.8px;height:32.4px;background:#cdcdcd;"></div>
<span class="t" style="left:1909.0px;top:1265.3px;font-size:19px;letter-spacing:0.78px;">Incr</span>
<div style="left:1978.0px;top:1258.6px;width:93.0px;height:32.4px;background:linear-gradient(#ffffff,#f3f3f3 60%,#ececec);"></div>
<div style="left:2069.8px;top:1258.6px;width:1.8px;height:32.4px;background:#cdcdcd;"></div>
<span class="t" style="left:2012.0px;top:1265.3px;font-size:19px;letter-spacing:-0.35px;">RF</span>
<div style="left:2071.0px;top:1258.6px;width:113.0px;height:32.4px;background:linear-gradient(#ffffff,#f3f3f3 60%,#ececec);"></div>
<div style="left:2182.8px;top:1258.6px;width:1.8px;height:32.4px;background:#cdcdcd;"></div>
<span class="t" style="left:2106.0px;top:1265.3px;font-size:19px;letter-spacing:0.60px;">Type</span>
<div style="left:2184.0px;top:1258.6px;width:130.5px;height:32.4px;background:linear-gradient(#ffffff,#f3f3f3 60%,#ececec);"></div>
<div style="left:2313.3px;top:1258.6px;width:1.8px;height:32.4px;background:#cdcdcd;"></div>
<span class="t" style="left:2217.8px;top:1265.3px;font-size:19px;letter-spacing:0.77px;">Fanout</span>
<div style="left:2314.5px;top:1258.6px;width:287.5px;height:32.4px;background:linear-gradient(#ffffff,#f3f3f3 60%,#ececec);"></div>
<div style="left:2600.8px;top:1258.6px;width:1.8px;height:32.4px;background:#cdcdcd;"></div>
<span class="t" style="left:2419.8px;top:1265.3px;font-size:19px;letter-spacing:0.74px;">Location</span>
<div style="left:2602.0px;top:1258.6px;width:214.0px;height:32.4px;background:linear-gradient(#ffffff,#f3f3f3 60%,#ececec);"></div>
<div style="left:2814.8px;top:1258.6px;width:1.8px;height:32.4px;background:#cdcdcd;"></div>
<span class="t" style="left:2648.0px;top:1265.3px;font-size:19px;letter-spacing:0.56px;">Element Type</span>
<div style="left:2816.0px;top:1258.6px;width:852.5px;height:32.4px;background:linear-gradient(#ffffff,#f3f3f3 60%,#ececec);"></div>
<div style="left:3667.3px;top:1258.6px;width:1.8px;height:32.4px;background:#cdcdcd;"></div>
<span class="t" style="left:3205.8px;top:1265.3px;font-size:19px;letter-spacing:0.55px;">Element</span>
<div style="left:1644.0px;top:1289.8px;width:2024.5px;height:2.0px;background:#bdbdbd;"></div>
<div style="left:1644.0px;top:1291.2px;width:2024.5px;height:29.8px;background:#fff;"></div>
<div style="left:1644.0px;top:1291.2px;width:66.0px;height:29.8px;background:#f0f0f0;"></div>
<div style="left:1644.0px;top:1319.8px;width:2024.5px;height:1.8px;background:#c8c8c6;"></div>
<span class="t" style="left:1648.5px;top:1296.9px;font-size:19px;letter-spacing:0.45px;">1</span>
<span class="t" style="left:1750.0px;top:1296.9px;font-size:19px;letter-spacing:0.45px;">19.999</span>
<span class="t" style="left:1880.5px;top:1296.9px;font-size:19px;letter-spacing:0.45px;">19.999</span>
<span class="t" style="left:2822.5px;top:1296.9px;font-size:19px;letter-spacing:0.45px;">latch edge time</span>
<div style="left:1644.0px;top:1321.0px;width:2024.5px;height:29.8px;background:#e9e7e3;"></div>
<div style="left:1644.0px;top:1321.0px;width:66.0px;height:29.8px;background:#e6e4e0;"></div>
<div style="left:1644.0px;top:1349.6px;width:2024.5px;height:1.8px;background:#c8c8c6;"></div>
<span class="t" style="left:1648.5px;top:1326.7px;font-size:19px;letter-spacing:0.45px;">2</span>
<svg style="left:1720.8px;top:1332.7px;" width="12.5" height="6.6" viewBox="0 0 12.5 6.6"><path d="M0 0 H12.5 L6.25 6.6z" fill="#555"/></svg>
<span class="t" style="left:1750.0px;top:1326.7px;font-size:19px;letter-spacing:0.45px;">19.383</span>
<span class="t" style="left:1880.5px;top:1326.7px;font-size:19px;letter-spacing:0.45px;">-0.616</span>
<span class="t" style="left:2822.5px;top:1326.7px;font-size:19px;letter-spacing:0.45px;">clock path</span>
<div style="left:1644.0px;top:1350.8px;width:2024.5px;height:29.8px;background:#fff;"></div>
<div style="left:1644.0px;top:1350.8px;width:66.0px;height:29.8px;background:#f0f0f0;"></div>
<div style="left:1644.0px;top:1379.4px;width:2024.5px;height:1.8px;background:#c8c8c6;"></div>
<span class="t" style="left:1648.5px;top:1356.5px;font-size:19px;letter-spacing:0.45px;">1</span>
<span class="t" style="left:1784.0px;top:1356.5px;font-size:19px;letter-spacing:0.45px;">19.999</span>
<span class="t" style="left:1890.5px;top:1356.5px;font-size:19px;letter-spacing:0.45px;">0.000</span>
<span class="t" style="left:2822.5px;top:1356.5px;font-size:19px;letter-spacing:0.45px;">source latency</span>
<div style="left:1708.8px;top:1291.0px;width:1.8px;height:80.0px;background:#c8c8c6;"></div>
<div style="left:1872.8px;top:1291.0px;width:1.8px;height:80.0px;background:#c8c8c6;"></div>
<div style="left:1976.8px;top:1291.0px;width:1.8px;height:80.0px;background:#c8c8c6;"></div>
<div style="left:2069.8px;top:1291.0px;width:1.8px;height:80.0px;background:#c8c8c6;"></div>
<div style="left:2182.8px;top:1291.0px;width:1.8px;height:80.0px;background:#c8c8c6;"></div>
<div style="left:2313.3px;top:1291.0px;width:1.8px;height:80.0px;background:#c8c8c6;"></div>
<div style="left:2600.8px;top:1291.0px;width:1.8px;height:80.0px;background:#c8c8c6;"></div>
<div style="left:2814.8px;top:1291.0px;width:1.8px;height:80.0px;background:#c8c8c6;"></div>
<div style="left:3667.3px;top:1291.0px;width:1.8px;height:80.0px;background:#c8c8c6;"></div>
</div></div>
<div style="left:3670.0px;top:1258.6px;width:22.5px;height:112.4px;background:#fafafa;"></div>
<div style="left:3670.0px;top:1258.6px;width:1.0px;height:112.4px;background:#d6d6d6;"></div>
<div style="left:3671.0px;top:1325.0px;width:21.5px;height:25.5px;background:#e4e4e4;"></div>
<div style="left:3671.0px;top:1281.0px;width:21.5px;height:1.0px;background:#dcdcdc;"></div>
<svg style="left:3675.0px;top:1266.0px;" width="13" height="7" viewBox="0 0 13 7"><path d="M0 7 H13 L6.5 0z" fill="#505050"/></svg>
<svg style="left:3675.0px;top:1356.5px;" width="13" height="7" viewBox="0 0 13 7"><path d="M0 0 H13 L6.5 7z" fill="#505050"/></svg>
<div style="left:647.2px;top:727.0px;width:2.0px;height:2.0px;background:#bdbdbd;"></div>
<div style="left:1634.3px;top:871.0px;width:2.0px;height:2.0px;background:#bdbdbd;"></div>
<div style="left:647.2px;top:731.6px;width:2.0px;height:2.0px;background:#bdbdbd;"></div>
<div style="left:1634.3px;top:875.6px;width:2.0px;height:2.0px;background:#bdbdbd;"></div>
<div style="left:647.2px;top:736.2px;width:2.0px;height:2.0px;background:#bdbdbd;"></div>
<div style="left:1634.3px;top:880.2px;width:2.0px;height:2.0px;background:#bdbdbd;"></div>
<div style="left:647.2px;top:740.8px;width:2.0px;height:2.0px;background:#bdbdbd;"></div>
<div style="left:1634.3px;top:884.8px;width:2.0px;height:2.0px;background:#bdbdbd;"></div>
<div style="left:647.2px;top:745.4px;width:2.0px;height:2.0px;background:#bdbdbd;"></div>
<div style="left:1634.3px;top:889.4px;width:2.0px;height:2.0px;background:#bdbdbd;"></div>
<div style="left:647.2px;top:750.0px;width:2.0px;height:2.0px;background:#bdbdbd;"></div>
<div style="left:1634.3px;top:894.0px;width:2.0px;height:2.0px;background:#bdbdbd;"></div>
<div style="left:7.0px;top:1386.0px;width:36.0px;height:229.5px;background:#f0f0f0;border:1.5px solid #c6c6c6;border-left:none;"></div>
<div style="left:16.0px;top:1396.5px;width:18.5px;height:17.0px;border:1.5px solid #707070;border-radius:3.5px;"></div>
<svg style="left:19.2px;top:1399.0px;" width="12" height="12" viewBox="0 0 12 12"><path d="M1.5 1.5 L10.5 10.5 M10.5 1.5 L1.5 10.5" stroke="#333" stroke-width="2.6" fill="none"/></svg>
<div style="left:16.0px;top:1426.0px;width:18.5px;height:17.0px;border:1.5px solid #707070;border-radius:3.5px;"></div>
<svg style="left:19.1px;top:1428.6px;" width="12.5" height="12" viewBox="0 0 12.5 12"><rect x="4.6" y="0.8" width="7" height="6.6" rx="1.5" fill="none" stroke="#555" stroke-width="1.4"/><rect x="0.8" y="4.4" width="7" height="6.6" rx="1.5" fill="#f0f0f0" stroke="#555" stroke-width="1.4"/></svg>
<div style="left:12.0px;top:1450.5px;width:25.5px;height:23.5px;background:#e2e2e2;border:1.5px solid #b8b8b8;border-radius:3px;"></div>
<svg style="left:18.6px;top:1454.8px;" width="12.5" height="15" viewBox="0 0 12.5 15"><path d="M4 1 h4 M5 1 v6 M7.6 1 v6 M2 7.4 h8.4 M6.2 7.4 v6" stroke="#444" stroke-width="1.5" fill="none"/></svg>
<span class="t" style="left:18.2px;top:1481.2px;font-size:19px;letter-spacing:0.45px;color:#222;font-weight:bold;">?</span>
<span class="t" style="left:-11px;top:1566px;width:72px;height:19px;font-size:19px;letter-spacing:0.75px;transform:rotate(-90deg);transform-origin:center;text-align:center;">Console</span>
<div style="left:46.0px;top:1389.0px;width:3652.0px;height:181.0px;background:#fff;border:1.5px solid #b4b4b4;border-top:2px solid #b0b0b0;border-bottom:2.6px solid #a4a4a4;"></div>
<div style="left:46.0px;top:1385.5px;width:3650.0px;height:1.2px;background:#d2d2d2;"></div>
<div style="left:1842.0px;top:1379.0px;width:2.0px;height:2.0px;background:#bdbdbd;"></div>
<div style="left:1846.6px;top:1379.0px;width:2.0px;height:2.0px;background:#bdbdbd;"></div>
<div style="left:1851.2px;top:1379.0px;width:2.0px;height:2.0px;background:#bdbdbd;"></div>
<div style="left:1855.8px;top:1379.0px;width:2.0px;height:2.0px;background:#bdbdbd;"></div>
<div style="left:1860.4px;top:1379.0px;width:2.0px;height:2.0px;background:#bdbdbd;"></div>
<div style="left:1865.0px;top:1379.0px;width:2.0px;height:2.0px;background:#bdbdbd;"></div>
<div style="left:47.5px;top:1510.0px;width:3623.0px;height:29.5px;background:#efefef;"></div>
<div style="left:3671.0px;top:1390.5px;width:21.5px;height:154.5px;background:#fafafa;"></div>
<div style="left:3670.5px;top:1390.5px;width:1.0px;height:154.5px;background:#d6d6d6;"></div>
<div style="left:3672.0px;top:1414.5px;width:20.5px;height:62.5px;background:#e4e4e4;border:1px solid #d4d4d4;"></div>
<svg style="left:3675.5px;top:1398.0px;" width="13" height="7" viewBox="0 0 13 7"><path d="M0 7 H13 L6.5 0z" fill="#505050"/></svg>
<svg style="left:3675.5px;top:1529.5px;" width="13" height="7" viewBox="0 0 13 7"><path d="M0 0 H13 L6.5 7z" fill="#505050"/></svg>
<div style="left:47.5px;top:1545.0px;width:3645.0px;height:22.5px;background:#fbfbfb;"></div>
<div style="left:47.5px;top:1544.5px;width:3645.0px;height:1.0px;background:#d4d4d4;"></div>
<div style="left:70.5px;top:1545.0px;width:1.0px;height:22.5px;background:#d9d9d9;"></div>
<div style="left:3647.5px;top:1545.0px;width:1.0px;height:22.5px;background:#d9d9d9;"></div>
<div style="left:3670.5px;top:1545.0px;width:1.0px;height:22.5px;background:#d9d9d9;"></div>
<div style="left:3671.0px;top:1545.0px;width:21.5px;height:22.5px;background:#f0f0f0;"></div>
<svg style="left:54.5px;top:1550.0px;" width="7" height="13" viewBox="0 0 7 13"><path d="M7 0 V13 L0 6.5z" fill="#505050"/></svg>
<svg style="left:3656.0px;top:1550.0px;" width="7" height="13" viewBox="0 0 7 13"><path d="M0 0 V13 L7 6.5z" fill="#505050"/></svg>
<svg style="left:86.0px;top:1392.5px;" width="26" height="26" viewBox="0 0 26 26"><circle cx="13" cy="13" r="13" fill="#0b68c8"/><circle cx="13" cy="6.5" r="2.3" fill="#fff"/><rect x="10.9" y="10.7" width="4.2" height="10.7" fill="#fff"/></svg>
<span class="t dm" style="left:121.2px;top:1394.2px;font-size:22px;color:#129212;">Deriving Clock Uncertainty. Please refer to report_sdc in the Timing Analyzer to see clock uncertainties.</span>
<span class="t" style="left:86.0px;top:1425.9px;font-size:17.5px;color:#1f4675;">tcl</span>
<svg style="left:104.2px;top:1428.3px;" width="8.5" height="15" viewBox="0 0 8.5 15"><path d="M1 1 L7 7.5 L1 14" stroke="#2877cc" stroke-width="1.8" fill="none"/></svg>
<span class="t dm" style="left:121.2px;top:1423.5px;font-size:22px;color:#111;">report_timing -to_clock { PLL0|iopll_0_outclk1 } -setup -npaths 10 -extra_info none -detail full_path -panel_name {Setup: PLL0|iopll_0_outclk1}</span>
<svg style="left:61.0px;top:1459.5px;" width="7" height="12" viewBox="0 0 7 12"><path d="M0 0 V12 L7 6.0z" fill="#555"/></svg>
<svg style="left:86.0px;top:1452.5px;" width="26" height="26" viewBox="0 0 26 26"><circle cx="13" cy="13" r="13" fill="#0b68c8"/><circle cx="13" cy="6.5" r="2.3" fill="#fff"/><rect x="10.9" y="10.7" width="4.2" height="10.7" fill="#fff"/></svg>
<span class="t dm" style="left:121.2px;top:1453.5px;font-size:22px;color:#129212;">Report Timing: Found 10 setup paths (0 violated).  Worst case slack is 1.651</span>
<svg style="left:90.0px;top:1487.5px;" width="18" height="16" viewBox="0 0 18 16"><path d="M8 1.5 L1.5 8 L8 14.5 M3.5 5.4 H17 M3.5 10.6 H17" stroke="#2c78c8" stroke-width="1.5" fill="none"/></svg>
<span class="t dm" style="left:121.2px;top:1483.5px;font-size:22px;color:#111;">10 1.651</span>
<div style="left:85.7px;top:1515.0px;width:27.5px;height:19.5px;background:#b9d7f1;"></div>
<span class="t" style="left:86.0px;top:1515.7px;font-size:17.5px;color:#1f4f8a;">tcl</span>
<svg style="left:104.2px;top:1518.1px;" width="8.5" height="15" viewBox="0 0 8.5 15"><path d="M1 1 L7 7.5 L1 14" stroke="#2877cc" stroke-width="1.8" fill="none"/></svg>
<div style="left:58.0px;top:1415.2px;width:1949.0px;height:40.3px;border:5px solid #f40000;"></div>
<svg style="left:0;top:0;" width="700" height="1654" viewBox="0 0 700 1654"><path d="M43.5 1569.5 L56.5 1606 Q59.5 1615 67 1615 H133 Q140 1615 143 1606 L156 1569.5z" fill="#fdfdfd"/><path d="M43.5 1570 L56.5 1606 Q59.5 1615 67 1615 H133 Q140 1615 143 1606 L156 1570" fill="none" stroke="#2e2e2e" stroke-width="2.1"/><path d="M156 1570 L169.5 1605 Q172.5 1613.6 180 1613.6 H232 Q239 1613.6 242 1605 L255.5 1570" fill="none" stroke="#2e2e2e" stroke-width="2.1"/></svg>
<span class="t" style="left:63.7px;top:1583.2px;font-size:19px;letter-spacing:0.43px;">Console</span>
<span class="t" style="left:176.0px;top:1581.2px;font-size:19px;letter-spacing:0.48px;">History</span>
<span class="t" style="left:3606.7px;top:1626.2px;font-size:19px;letter-spacing:-0.35px;">Ready</span>
<div style="left:3690.0px;top:1637.0px;width:2.0px;height:2.0px;background:#b8b8b8;"></div>
<div style="left:3690.0px;top:1641.5px;width:2.0px;height:2.0px;background:#b8b8b8;"></div>
<div style="left:3685.5px;top:1641.5px;width:2.0px;height:2.0px;background:#b8b8b8;"></div>
<div style="left:3690.0px;top:1646.0px;width:2.0px;height:2.0px;background:#b8b8b8;"></div>
<div style="left:3685.5px;top:1646.0px;width:2.0px;height:2.0px;background:#b8b8b8;"></div>
<div style="left:3681.0px;top:1646.0px;width:2.0px;height:2.0px;background:#b8b8b8;"></div>
</body></html>
